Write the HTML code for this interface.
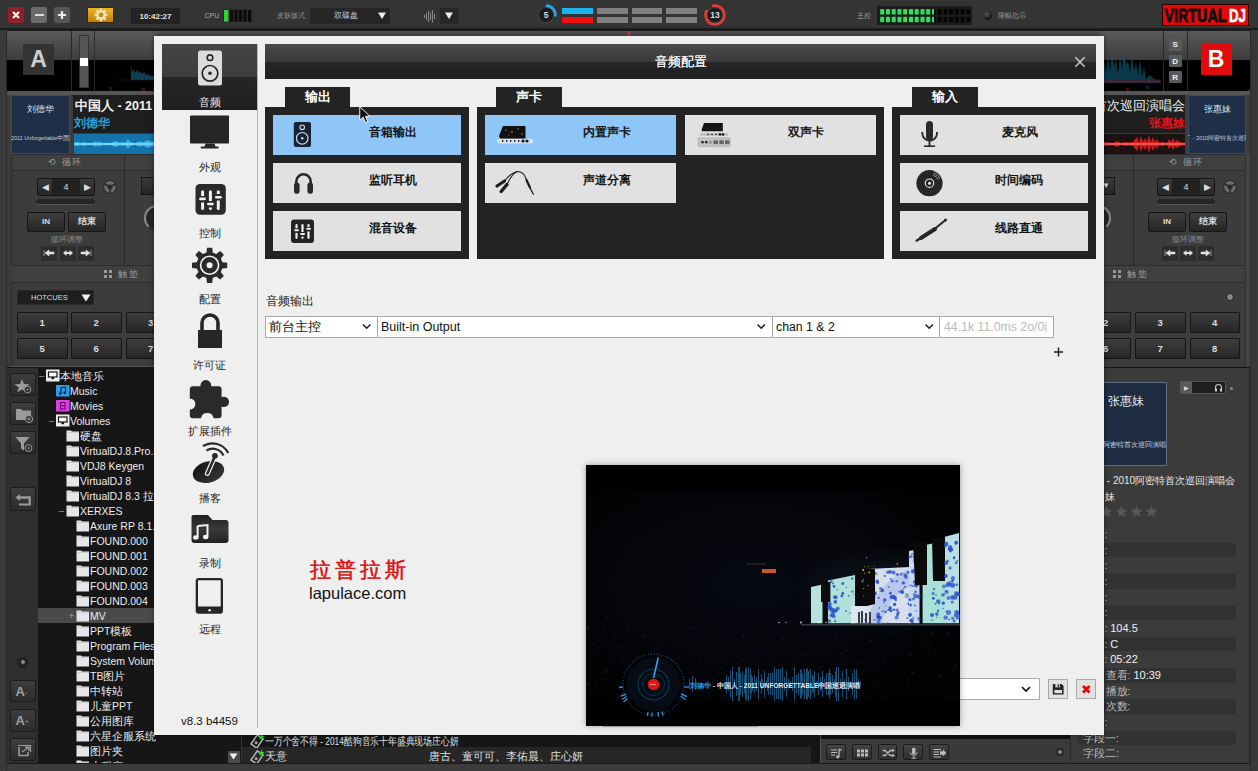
<!DOCTYPE html>
<html><head><meta charset="utf-8">
<style>
*{box-sizing:border-box;margin:0;padding:0}
html,body{width:1258px;height:771px;overflow:hidden;background:#3c3c3c;font-family:"Liberation Sans",sans-serif}
.a{position:absolute}
.c{display:flex;align-items:center;justify-content:center}
/* top bar */
#top{left:0;top:0;width:1258px;height:31px;background:#343434;border-bottom:3px solid #1b1b1b}
/* deck */
.dk{background:#3c3c3c}
.btn{background:linear-gradient(#3e3e3e,#262626);border:1px solid #161616;border-radius:2px;color:#ddd;font-weight:bold;font-size:8px}
.tree div{position:absolute;height:15px;line-height:15px;font-size:10.5px;color:#eee;white-space:nowrap}
.fold{display:inline-block;width:13px;height:11px;background:#e8e8e8;vertical-align:-1px;margin-right:1px;position:relative}
.tbb{width:26.5px;background:linear-gradient(#3e3e3e,#2b2b2b);border:1px solid #1c1c1c;border-radius:2px}
.tbb2{top:743.5px;width:19.5px;height:16.5px;background:linear-gradient(#444,#2e2e2e);border:1px solid #1c1c1c;border-radius:2px}
.tt{height:15px;line-height:15px;font-size:10.5px;color:#ececec;white-space:nowrap}
.it{height:15px;line-height:15px;font-size:10.3px;color:#b8b8b8;white-space:nowrap}
.it b{font-weight:normal;color:#f0f0f0;font-size:11px}
/* dialog */
#dlg{left:154px;top:36px;width:950px;height:699px;background:#efefef;box-shadow:0 0 4px rgba(0,0,0,.5)}
.pn{background:#232323}
.tab{background:#232323;color:#fff;font-size:13px;font-weight:bold;text-align:center;line-height:20px;height:20px}
.bt{background:#e1e1e1;height:40px}
.bt.sel{background:#8ec6f7}
.bt span{position:absolute;font-size:12.3px;font-weight:bold;color:#151515;top:0;line-height:34px}
.side{position:absolute;font-size:10.5px;line-height:14px;color:#262626;text-align:center;width:95px;left:8px}
.sel2{border:1px solid #a9a9a9;background:#fff;height:22px}
</style></head>
<body>
<!-- ================= TOP BAR ================= -->
<div id="top" class="a">
  <div class="a c" style="left:8px;top:7px;width:16px;height:16px;background:#8e2029;border-radius:2px"><svg width="10" height="10"><path d="M2 2 L8 8 M8 2 L2 8" stroke="#f4f4f4" stroke-width="2.2"/></svg></div>
  <div class="a c" style="left:31px;top:7px;width:16px;height:16px;background:#6a6a6a;border-radius:2px"><div style="width:9px;height:2.2px;background:#ddd"></div></div>
  <div class="a c" style="left:54px;top:7px;width:16px;height:16px;background:#565656;border-radius:2px"><svg width="10" height="10"><path d="M1 5 H9 M5 1 V9" stroke="#eee" stroke-width="2.2"/></svg></div>
  <div class="a c" style="left:87px;top:6.5px;width:27px;height:16px;background:linear-gradient(#f0b424,#c08008);border-radius:1px;border:1px solid #3a2800"><svg width="14" height="14" viewBox="-7 -7 14 14"><g fill="#f2e4c0"><circle r="4.6"/><rect x="-1.3" y="-6.4" width="2.6" height="12.8"/><rect x="-1.3" y="-6.4" width="2.6" height="12.8" transform="rotate(45)"/><rect x="-1.3" y="-6.4" width="2.6" height="12.8" transform="rotate(90)"/><rect x="-1.3" y="-6.4" width="2.6" height="12.8" transform="rotate(135)"/></g><circle r="2.4" fill="#c88a10"/></svg></div>
  <div class="a c" style="left:131px;top:8px;width:49px;height:16px;background:#232323;color:#e6e6e6;font-size:8px;font-weight:bold">10:42:27</div>
  <div class="a" style="left:204.5px;top:11px;font-size:7px;color:#aaa;line-height:10px">CPU</div>
  <div class="a" style="left:223px;top:8.7px;width:30px;height:13.6px;background:#2a2a2a"></div>
  <svg class="a" style="left:223px;top:8.7px" width="30" height="14"><rect x="1" y="1" width="4.4" height="11.6" fill="#35d040"/><rect x="7" y="1" width="3" height="11.6" fill="#0a0a0a"/><rect x="11.5" y="1" width="3" height="11.6" fill="#0a0a0a"/><rect x="16" y="1" width="3" height="11.6" fill="#0a0a0a"/><rect x="20.5" y="1" width="3" height="11.6" fill="#0a0a0a"/><rect x="25" y="1" width="3" height="11.6" fill="#0a0a0a"/></svg>
  <div class="a" style="left:276.5px;top:11px;font-size:6.8px;color:#999;line-height:10px">皮肤版式</div>
  <div class="a" style="left:310px;top:8px;width:80px;height:16px;background:#262626;color:#c8c8c8;font-size:7.5px;line-height:16px;padding-left:24px">双碟盘</div>
  <svg class="a" style="left:377px;top:11px" width="10" height="9"><path d="M1 1.5 H9 L5 8 Z" fill="#eee"/></svg>
  <svg class="a" style="left:422px;top:8px" width="16" height="16"><g stroke="#8a8a8a" stroke-width="1"><path d="M2.5 7 V10 M4.5 5 V12 M6.5 3 V14 M8.5 4.5 V12.5 M10.5 2.5 V14.5 M12.5 6 V11"/></g></svg>
  <div class="a" style="left:439.5px;top:8px;width:19px;height:16px;background:#262626"></div>
  <svg class="a" style="left:444px;top:11px" width="10" height="9"><path d="M1 1.5 H9 L5 8 Z" fill="#eee"/></svg>
  <svg class="a" style="left:534px;top:3px" width="24" height="24" viewBox="-12 -12 24 24"><circle r="9.4" fill="#3a3a3a"/><circle r="7" fill="#1c1c1c"/><path d="M0 -9.4 A9.4 9.4 0 0 1 9.3 1.5" fill="none" stroke="#2aa8e8" stroke-width="2.6"/><text x="0" y="3" font-family="Liberation Sans" font-size="8.5" font-weight="bold" fill="#ddd" text-anchor="middle">5</text></svg>
  <div class="a" style="left:561.5px;top:8px;width:31px;height:6px;background:#1eb4f0"></div>
  <div class="a" style="left:561.5px;top:17px;width:31px;height:6.3px;background:#ee1010"></div>
  <div class="a" style="left:597px;top:8px;width:30.5px;height:6px;background:#808080"></div>
  <div class="a" style="left:597px;top:17px;width:30.5px;height:6.3px;background:#808080"></div>
  <div class="a" style="left:631.5px;top:8px;width:30.5px;height:6px;background:#808080"></div>
  <div class="a" style="left:631.5px;top:17px;width:30.5px;height:6.3px;background:#808080"></div>
  <div class="a" style="left:666px;top:8px;width:30.5px;height:6px;background:#808080"></div>
  <div class="a" style="left:666px;top:17px;width:30.5px;height:6.3px;background:#808080"></div>
  <svg class="a" style="left:702.5px;top:3px" width="24" height="24" viewBox="-12 -12 24 24"><circle r="9.4" fill="#3a3a3a"/><circle r="7" fill="#1c1c1c"/><path d="M-8 -5 A9.4 9.4 0 1 0 -3 -8.9" fill="none" stroke="#e83838" stroke-width="2.6"/><text x="0" y="3" font-family="Liberation Sans" font-size="8.5" font-weight="bold" fill="#ddd" text-anchor="middle">13</text></svg>
  <div class="a" style="left:857px;top:11px;font-size:6.8px;color:#aaa;line-height:10px">主控</div>
  <div class="a" style="left:877px;top:5.6px;width:95px;height:19.5px;background:#1c1c1c"></div>
  <svg class="a" style="left:877px;top:5.6px" width="95" height="20"><rect x="3.2" y="3.1" width="4" height="5.4" fill="#2fe05a"/><rect x="9.0" y="3.1" width="4" height="5.4" fill="#2fe05a"/><rect x="14.7" y="3.1" width="4" height="5.4" fill="#2fe05a"/><rect x="20.5" y="3.1" width="4" height="5.4" fill="#2fe05a"/><rect x="26.2" y="3.1" width="4" height="5.4" fill="#2fe05a"/><rect x="32.0" y="3.1" width="4" height="5.4" fill="#2fe05a"/><rect x="37.7" y="3.1" width="4" height="5.4" fill="#2fe05a"/><rect x="43.5" y="3.1" width="4" height="5.4" fill="#2fe05a"/><rect x="49.2" y="3.1" width="4" height="5.4" fill="#2fe05a"/><rect x="55.0" y="3.1" width="4" height="5.4" fill="#050505"/><rect x="60.7" y="3.1" width="4" height="5.4" fill="#050505"/><rect x="66.5" y="3.1" width="4" height="5.4" fill="#050505"/><rect x="72.2" y="3.1" width="4" height="5.4" fill="#050505"/><rect x="78.0" y="3.1" width="4" height="5.4" fill="#050505"/><rect x="83.7" y="3.1" width="4" height="5.4" fill="#050505"/><rect x="89.5" y="3.1" width="4" height="5.4" fill="#050505"/><rect x="55.0" y="3.1" width="2" height="5.4" fill="#2fe05a"/><rect x="3.2" y="10.8" width="4" height="5.4" fill="#2fe05a"/><rect x="9.0" y="10.8" width="4" height="5.4" fill="#2fe05a"/><rect x="14.7" y="10.8" width="4" height="5.4" fill="#2fe05a"/><rect x="20.5" y="10.8" width="4" height="5.4" fill="#2fe05a"/><rect x="26.2" y="10.8" width="4" height="5.4" fill="#2fe05a"/><rect x="32.0" y="10.8" width="4" height="5.4" fill="#2fe05a"/><rect x="37.7" y="10.8" width="4" height="5.4" fill="#2fe05a"/><rect x="43.5" y="10.8" width="4" height="5.4" fill="#2fe05a"/><rect x="49.2" y="10.8" width="4" height="5.4" fill="#2fe05a"/><rect x="55.0" y="10.8" width="4" height="5.4" fill="#050505"/><rect x="60.7" y="10.8" width="4" height="5.4" fill="#050505"/><rect x="66.5" y="10.8" width="4" height="5.4" fill="#050505"/><rect x="72.2" y="10.8" width="4" height="5.4" fill="#050505"/><rect x="78.0" y="10.8" width="4" height="5.4" fill="#050505"/><rect x="83.7" y="10.8" width="4" height="5.4" fill="#050505"/><rect x="89.5" y="10.8" width="4" height="5.4" fill="#050505"/><rect x="55.0" y="10.8" width="2" height="5.4" fill="#2fe05a"/></svg>
  <div class="a" style="left:983px;top:11px;width:9px;height:9px;border-radius:50%;background:radial-gradient(circle at 40% 35%,#555,#111 70%)"></div>
  <div class="a" style="left:998px;top:11px;font-size:6.8px;color:#999;line-height:10px">限幅指示</div>
  <svg class="a" style="left:1162px;top:4px" width="87" height="22"><rect x="0.5" y="0.5" width="86" height="21" fill="#e00a0a" stroke="#300" stroke-width="1"/><text x="2.6" y="17.6" font-family="Liberation Sans" font-weight="bold" font-size="19" fill="#111" stroke="#111" stroke-width="0.9" textLength="61.8" lengthAdjust="spacingAndGlyphs">VIRTUAL</text><text x="67" y="17.6" font-family="Liberation Sans" font-weight="bold" font-size="19" fill="#fff" stroke="#fff" stroke-width="0.6" textLength="17" lengthAdjust="spacingAndGlyphs">DJ</text></svg>
</div>
<div class="a" style="left:0;top:31px;width:1258px;height:6px;background:linear-gradient(#505050,#464646)"></div>
<div class="a" style="left:628px;top:31px;width:2px;height:5px;background:#e03030"></div>

<!-- ================= LEFT DECK ================= -->
<div class="a" style="left:0;top:30px;width:7px;height:741px;background:#3a3a3a;border-right:1px solid #2a2a2a"></div>
<div class="a dk" style="left:7px;top:31px;width:150px;height:336px;border-radius:4px 0 0 0"></div>
<!-- top section -->
<div class="a" style="left:7px;top:31px;width:150px;height:29px;background:linear-gradient(#5a5a5a,#3c3c3c);border-radius:4px 0 0 0"></div>
<div class="a" style="left:7px;top:60px;width:150px;height:31px;background:#000"></div>
<div class="a" style="left:71px;top:31px;width:1px;height:60px;background:#2a2a2a"></div>
<div class="a" style="left:94px;top:31px;width:1px;height:60px;background:#2a2a2a"></div>
<div class="a c" style="left:23px;top:44px;width:31px;height:31px;background:#333;color:#cfcfcf;font-size:23px;font-weight:bold">A</div>
<div class="a" style="left:79px;top:34.5px;width:10px;height:53.5px;background:#555;border:1px solid #333"></div>
<div class="a" style="left:80px;top:58px;width:8px;height:8px;background:#fff"></div>
<svg class="a" style="left:95px;top:60px;opacity:.65" width="60" height="31">
  <path d="M36 20 L36 5 L37 12 L39 9 L40 13 L42 10 L44 13 L45 11 L47 14 L49 12 L51 15 L53 14 L55 16 L57 15 L59 17 V20 Z" fill="#17607f"/>
  <rect x="20" y="19.5" width="40" height="1" fill="#0e3a4c" opacity=".5"/>
  <rect x="46" y="28" width="4" height="3" fill="#6a1010"/>
  <rect x="14" y="27" width="3" height="4" fill="#0c3020"/>
  <rect x="58" y="27" width="4" height="3" fill="#0c3e58"/>
</svg>
<div class="a" style="left:7px;top:91px;width:150px;height:4px;background:#555"></div>
<!-- song info -->
<div class="a" style="left:11px;top:95px;width:59px;height:59px;background:#1f2f47;border:1px solid #3a4a60"></div>
<div class="a" style="left:11px;top:103px;width:59px;text-align:center;font-size:9px;color:#dfe6ee">刘德华</div>
<div class="a" style="left:11px;top:135px;width:59px;text-align:center;font-size:5.5px;color:#c8d0da;white-space:nowrap;overflow:hidden">2011 Unforgettable中国巡</div>
<div class="a" style="left:73px;top:95px;width:84px;height:38px;background:#1e1e1e"></div>
<div class="a" style="left:75px;top:97px;font-size:12.5px;font-weight:bold;color:#f2f2f2;white-space:nowrap;line-height:18px">中国人 - 2011 U</div>
<div class="a" style="left:74px;top:114px;font-size:11.5px;font-weight:bold;color:#2b9fdc;white-space:nowrap;line-height:18px">刘德华</div>
<div class="a" style="left:74px;top:134px;width:84px;height:20px;background:#1473aa"></div>
<svg class="a" style="left:74px;top:134px" width="84" height="20"><path d="M0 10 L0 8.8 L2 8.0 L4 8.0 L6 8.8 L8 9.0 L10 7.5 L12 8.5 L14 9.0 L16 8.5 L18 9.0 L20 8.0 L22 7.5 L24 8.5 L26 7.5 L28 8.8 L30 9.0 L32 8.8 L34 8.5 L36 9.0 L38 8.5 L40 7.5 L42 7.0 L44 8.0 L46 8.8 L48 8.0 L50 8.5 L52 8.0 L54 5.0 L56 8.0 L58 8.0 L60 9.0 L62 9.0 L64 7.5 L66 7.5 L68 8.0 L70 8.0 L72 7.0 L74 6.0 L76 7.5 L78 7.5 L80 8.0 L82 7.5 L84 8.8 L84 10 L84 11.2 L82 12.5 L80 12.0 L78 12.5 L76 12.5 L74 14.0 L72 13.0 L70 12.0 L68 12.0 L66 12.5 L64 12.5 L62 11.0 L60 11.0 L58 12.0 L56 12.0 L54 15.0 L52 12.0 L50 11.5 L48 12.0 L46 11.2 L44 12.0 L42 13.0 L40 12.5 L38 11.5 L36 11.0 L34 11.5 L32 11.2 L30 11.0 L28 11.2 L26 12.5 L24 11.5 L22 12.5 L20 12.0 L18 11.0 L16 11.5 L14 11.0 L12 11.5 L10 12.5 L8 11.0 L6 11.2 L4 12.0 L2 12.0 L0 11.2 Z" fill="#3ab4ee"/><rect x="0" y="9.3" width="84" height="1.4" fill="#8fdcff"/></svg>
<!-- loop section -->
<div class="a" style="left:11px;top:154px;width:113px;height:17px;background:#3f3f3f;border-top:1px solid #2c2c2c;border-bottom:1px solid #2c2c2c"></div>
<div class="a" style="left:125px;top:154px;width:32px;height:17px;background:#3f3f3f;border-top:1px solid #2c2c2c;border-bottom:1px solid #2c2c2c"></div>
<div class="a" style="left:48px;top:157px;font-size:9px;color:#9a9a9a;letter-spacing:1.5px;line-height:11px">⟲ 循环</div>
<div class="a" style="left:124px;top:154px;width:1px;height:112px;background:#2a2a2a"></div>
<div class="a" style="left:11px;top:154px;width:1px;height:212px;background:#2e2e2e"></div>
<div class="a" style="left:37px;top:177.5px;width:58px;height:18px;background:#222;border:1px solid #151515;border-radius:2px"></div>
<div class="a c" style="left:38px;top:178.5px;width:14px;height:16px;background:linear-gradient(#3a3a3a,#262626);color:#ddd;font-size:9px">◀</div>
<div class="a c" style="left:80px;top:178.5px;width:14px;height:16px;background:linear-gradient(#3a3a3a,#262626);color:#ddd;font-size:9px">▶</div>
<div class="a c" style="left:52px;top:178.5px;width:28px;height:16px;color:#ddd;font-size:9px">4</div>
<svg class="a" style="left:102.5px;top:179.5px" width="14" height="14" viewBox="-7 -7 14 14"><circle r="6.5" fill="#6a6a6a" stroke="#2a2a2a" stroke-width="1.2"/><circle r="2.4" fill="#2a2a2a"/><path d="M0 2 V6 M-1.8 -1 L-5.2 -3 M1.8 -1 L5.2 -3" stroke="#2a2a2a" stroke-width="1.6"/></svg>
<div class="a" style="left:141px;top:177px;width:16px;height:18px;background:linear-gradient(#3a3a3a,#252525);border:1px solid #151515"></div>
<div class="a" style="left:144px;top:205px;width:26px;height:26px;border-radius:50%;background:#262626;border:2px solid #8a8a8a;border-right-color:#333;border-bottom-color:#333"></div>
<div class="a" style="left:36px;top:199px;width:59px;height:6px;background:#252525;border-radius:3px;border-bottom:1px solid #555"></div>
<div class="a c btn" style="left:27px;top:211.5px;width:38px;height:20px">IN</div>
<div class="a c btn" style="left:68px;top:211.5px;width:38px;height:20px;font-size:8.5px">结束</div>
<div class="a" style="left:50px;top:235px;width:34px;text-align:center;font-size:7.5px;color:#8a8a8a;line-height:10px">循环调整</div>
<div class="a c" style="left:41px;top:245.5px;width:16px;height:15px;background:#2d2d2d;color:#ddd;font-size:8px;border-radius:1px"><svg width="12" height="8"><path d="M1 1 V7 M2 4 L6 1 V3 H11 V5 H6 V7 Z" fill="#e0e0e0" stroke="#e0e0e0" stroke-width=".6"/></svg></div>
<div class="a c" style="left:59.5px;top:245.5px;width:16px;height:15px;background:#2d2d2d;color:#ddd;font-size:8px;border-radius:1px"><svg width="12" height="8"><path d="M1 4 L4.5 1 V3 H7.5 V1 L11 4 L7.5 7 V5 H4.5 V7 Z" fill="#e0e0e0"/></svg></div>
<div class="a c" style="left:78px;top:245.5px;width:16px;height:15px;background:#2d2d2d;color:#ddd;font-size:8px;border-radius:1px"><svg width="12" height="8"><path d="M11 1 V7 M10 4 L6 1 V3 H1 V5 H6 V7 Z" fill="#e0e0e0" stroke="#e0e0e0" stroke-width=".6"/></svg></div>
<!-- pads -->
<div class="a" style="left:11px;top:265px;width:146px;height:18px;background:#3f3f3f;border-top:1px solid #2c2c2c;border-bottom:1px solid #2c2c2c"></div>
<div class="a" style="left:104px;top:270px;width:8px;height:8px;background:repeating-linear-gradient(90deg,#9a9a9a 0 3px,transparent 3px 5px)"></div>
<div class="a" style="left:104px;top:273px;width:8px;height:2px;background:#3f3f3f"></div>
<div class="a" style="left:118px;top:269px;font-size:8.5px;color:#9a9a9a;letter-spacing:1.5px;line-height:10px">触垫</div>
<div class="a" style="left:17px;top:290px;width:77px;height:15px;background:#1e1e1e;border:1px solid #2a2a2a;color:#ddd;font-size:7.5px;line-height:13px;padding-left:13px">HOTCUES<svg style="position:absolute;left:63px;top:3px" width="10" height="8"><path d="M0.5 0.5 H9.5 L5 7.5 Z" fill="#eee"/></svg></div>
<div class="a c btn" style="left:17.0px;top:312px;width:50.5px;height:20.5px;font-size:9.5px;border-radius:1px">1</div>
<div class="a c btn" style="left:71.0px;top:312px;width:50.5px;height:20.5px;font-size:9.5px;border-radius:1px">2</div>
<div class="a c btn" style="left:125.5px;top:312px;width:50.5px;height:20.5px;font-size:9.5px;border-radius:1px">3</div>
<div class="a c btn" style="left:17.0px;top:338px;width:50.5px;height:20.5px;font-size:9.5px;border-radius:1px">5</div>
<div class="a c btn" style="left:71.0px;top:338px;width:50.5px;height:20.5px;font-size:9.5px;border-radius:1px">6</div>
<div class="a c btn" style="left:125.5px;top:338px;width:50.5px;height:20.5px;font-size:9.5px;border-radius:1px">7</div>
<div class="a" style="left:11px;top:366px;width:146px;height:1px;background:#555"></div>

<!-- ================= RIGHT DECK ================= -->
<div class="a" style="left:1250px;top:30px;width:8px;height:741px;background:#383838;border-left:1px solid #2a2a2a"></div>
<div class="a dk" style="left:1100px;top:31px;width:150px;height:336px;border-radius:0 4px 0 0"></div>
<div class="a" style="left:1100px;top:31px;width:150px;height:29px;background:linear-gradient(#5a5a5a,#3c3c3c);border-radius:0 4px 0 0"></div>
<div class="a" style="left:1100px;top:60px;width:150px;height:31px;background:#000;border-radius:0 0 4px 0"></div>
<svg class="a" style="left:1100px;top:31px;opacity:.6" width="64" height="60">
  <path d="M3 50 L4 30 L6 42 L8 26 L10 40 L12 20 L14 36 L16 28 L18 44 L20 24 L22 38 L24 18 L26 34 L28 30 L30 42 L32 22 L34 40 L36 32 L38 44 L40 28 L42 46 L44 36 L46 48 L50 44 L54 48 L60 49 V52 H3 Z" fill="#13607f"/>
  <rect x="3" y="49" width="58" height="3" fill="#7a3a5a" opacity=".8"/>
  <rect x="26" y="57" width="3" height="3" fill="#8a1010"/>
  <rect x="46" y="55" width="3" height="3" fill="#0c3e58"/>
</svg>
<div class="a" style="left:1163px;top:31px;width:1px;height:60px;background:#2a2a2a"></div>
<div class="a" style="left:1187px;top:31px;width:1px;height:60px;background:#2a2a2a"></div>
<div class="a c" style="left:1169px;top:38.5px;width:12.5px;height:12px;background:#5a5a5a;color:#eee;font-size:8px;font-weight:bold;border-radius:1px">S</div>
<div class="a c" style="left:1169px;top:55px;width:12.5px;height:12px;background:#5a5a5a;color:#eee;font-size:8px;font-weight:bold;border-radius:1px">D</div>
<div class="a c" style="left:1169px;top:71px;width:12.5px;height:12px;background:#5a5a5a;color:#eee;font-size:8px;font-weight:bold;border-radius:1px">R</div>
<div class="a c" style="left:1200.5px;top:44px;width:31px;height:31px;background:#e00c0c;color:#fff;font-size:23px;font-weight:bold">B</div>
<div class="a" style="left:1100px;top:91px;width:150px;height:4px;background:#555"></div>
<div class="a" style="left:1100px;top:95px;width:85px;height:38px;background:#1e1e1e"></div>
<div class="a" style="left:1060px;top:97px;width:124.5px;text-align:right;font-size:13px;color:#f2f2f2;white-space:nowrap;line-height:18px">首次巡回演唱会</div>
<div class="a" style="left:1100px;top:114px;width:84.5px;text-align:right;font-size:11.5px;font-weight:bold;color:#e5161d;white-space:nowrap;line-height:18px">张惠妹</div>
<div class="a" style="left:1100px;top:134px;width:85px;height:20px;background:#1c1212"></div>
<svg class="a" style="left:1103px;top:134px" width="82" height="20">
  <path d="M0 8 L6 8.5 L10 9 L14 7 L18 9 L22 8 L26 8.5 L30 8 L34 3 L36 9 L38 2 L40 8 L42 4 L44 8 L46 1 L48 8 L50 3 L52 8 L54 5 L56 8.5 L60 8 L64 9 L66 5 L68 8 L70 4 L72 8 L74 6 L78 8.5 L82 8.5 V11.5 L78 11.5 L74 14 L72 12 L70 16 L68 12 L66 15 L64 11 L60 12 L56 11.5 L54 15 L52 12 L50 17 L48 12 L46 19 L44 12 L42 16 L40 12 L38 18 L36 11 L34 17 L30 12 L26 11.5 L22 12 L18 11 L14 13 L10 11 L6 11.5 L0 12 Z" fill="#d41818"/>
  <rect x="0" y="9.3" width="82" height="1.4" fill="#ff7070"/>
</svg>
<div class="a" style="left:1188px;top:95px;width:58px;height:59px;background:#1f2f47;border:1px solid #3a4a60"></div>
<div class="a" style="left:1188px;top:103px;width:58px;text-align:center;font-size:9px;color:#dfe6ee">张惠妹</div>
<div class="a" style="left:1188px;top:135px;width:58px;text-align:center;font-size:5.5px;color:#c8d0da;white-space:nowrap;overflow:hidden">ﾟ - 2010阿密特首次巡回演</div>
<!-- loop -->
<div class="a" style="left:1100px;top:154px;width:33px;height:17px;background:#3f3f3f;border-top:1px solid #2c2c2c;border-bottom:1px solid #2c2c2c"></div>
<div class="a" style="left:1134px;top:154px;width:112px;height:17px;background:#3f3f3f;border-top:1px solid #2c2c2c;border-bottom:1px solid #2c2c2c"></div>
<div class="a" style="left:1169px;top:157px;font-size:9px;color:#9a9a9a;letter-spacing:1.5px;line-height:11px">⟲ 循环</div>
<div class="a" style="left:1133px;top:154px;width:1px;height:112px;background:#2a2a2a"></div>
<div class="a" style="left:1245px;top:154px;width:6px;height:212px;background:#454545;border-left:1px solid #2e2e2e;border-right:1px solid #2e2e2e"></div>
<div class="a" style="left:1097px;top:177px;width:18px;height:18px;background:linear-gradient(#3a3a3a,#252525);border:1px solid #151515;color:#ddd;font-size:8px;line-height:16px;text-align:center">▼</div>
<div class="a" style="left:1085px;top:205px;width:26px;height:26px;border-radius:50%;background:#262626;border:2px solid #8a8a8a;border-left-color:#333;border-bottom-color:#333"></div>
<div class="a" style="left:1157px;top:177.5px;width:58px;height:18px;background:#222;border:1px solid #151515;border-radius:2px"></div>
<div class="a c" style="left:1158px;top:178.5px;width:14px;height:16px;background:linear-gradient(#3a3a3a,#262626);color:#ddd;font-size:9px">◀</div>
<div class="a c" style="left:1200px;top:178.5px;width:14px;height:16px;background:linear-gradient(#3a3a3a,#262626);color:#ddd;font-size:9px">▶</div>
<div class="a c" style="left:1172px;top:178.5px;width:28px;height:16px;color:#ddd;font-size:9px">4</div>
<svg class="a" style="left:1223px;top:179.5px" width="14" height="14" viewBox="-7 -7 14 14"><circle r="6.5" fill="#6a6a6a" stroke="#2a2a2a" stroke-width="1.2"/><circle r="2.4" fill="#2a2a2a"/><path d="M0 2 V6 M-1.8 -1 L-5.2 -3 M1.8 -1 L5.2 -3" stroke="#2a2a2a" stroke-width="1.6"/></svg>
<div class="a" style="left:1157px;top:199px;width:58px;height:6px;background:#252525;border-radius:3px;border-bottom:1px solid #555"></div>
<div class="a c btn" style="left:1148px;top:211.5px;width:38px;height:20px">IN</div>
<div class="a c btn" style="left:1188.5px;top:211.5px;width:38px;height:20px;font-size:8.5px">结束</div>
<div class="a" style="left:1171px;top:235px;width:34px;text-align:center;font-size:7.5px;color:#8a8a8a;line-height:10px">循环调整</div>
<div class="a c" style="left:1161.5px;top:245.5px;width:16px;height:15px;background:#2d2d2d;color:#ddd;font-size:8px;border-radius:1px"><svg width="12" height="8"><path d="M1 1 V7 M2 4 L6 1 V3 H11 V5 H6 V7 Z" fill="#e0e0e0" stroke="#e0e0e0" stroke-width=".6"/></svg></div>
<div class="a c" style="left:1180px;top:245.5px;width:16px;height:15px;background:#2d2d2d;color:#ddd;font-size:8px;border-radius:1px"><svg width="12" height="8"><path d="M1 4 L4.5 1 V3 H7.5 V1 L11 4 L7.5 7 V5 H4.5 V7 Z" fill="#e0e0e0"/></svg></div>
<div class="a c" style="left:1198px;top:245.5px;width:16px;height:15px;background:#2d2d2d;color:#ddd;font-size:8px;border-radius:1px"><svg width="12" height="8"><path d="M11 1 V7 M10 4 L6 1 V3 H1 V5 H6 V7 Z" fill="#e0e0e0" stroke="#e0e0e0" stroke-width=".6"/></svg></div>
<!-- pads -->
<div class="a" style="left:1100px;top:265px;width:145px;height:18px;background:#3f3f3f;border-top:1px solid #2c2c2c;border-bottom:1px solid #2c2c2c"></div>
<div class="a" style="left:1113px;top:270px;width:8px;height:8px;background:repeating-linear-gradient(90deg,#9a9a9a 0 3px,transparent 3px 5px)"></div>
<div class="a" style="left:1113px;top:273px;width:8px;height:2px;background:#3f3f3f"></div>
<div class="a" style="left:1127px;top:269px;font-size:8.5px;color:#9a9a9a;letter-spacing:1.5px;line-height:10px">触垫</div>
<div class="a" style="left:1226px;top:293px;width:8px;height:8px;border-radius:50%;background:#8a8a8a;border:1.5px solid #1e1e1e"></div>
<div class="a c btn" style="left:1080.5px;top:312px;width:50.5px;height:20.5px;font-size:9.5px;border-radius:1px">2</div>
<div class="a c btn" style="left:1135.0px;top:312px;width:50.5px;height:20.5px;font-size:9.5px;border-radius:1px">3</div>
<div class="a c btn" style="left:1189.5px;top:312px;width:50.5px;height:20.5px;font-size:9.5px;border-radius:1px">4</div>
<div class="a c btn" style="left:1080.5px;top:338px;width:50.5px;height:20.5px;font-size:9.5px;border-radius:1px">6</div>
<div class="a c btn" style="left:1135.0px;top:338px;width:50.5px;height:20.5px;font-size:9.5px;border-radius:1px">7</div>
<div class="a c btn" style="left:1189.5px;top:338px;width:50.5px;height:20.5px;font-size:9.5px;border-radius:1px">8</div>

<!-- ================= BROWSER ================= -->
<div class="a" style="left:7px;top:366.5px;width:1243px;height:397px;background:#303030;border-top:1.5px solid #151515"></div>
<!-- left toolbar -->
<div class="a" style="left:7px;top:368px;width:31px;height:395px;background:#2f2f2f"></div>
<div class="a tbb" style="left:9.5px;top:372.5px;height:23px"><svg width="26" height="23"><path d="M11 5 L13 10 L18.5 10.2 L14.2 13.5 L15.8 18.6 L11 15.5 L6.2 18.6 L7.8 13.5 L3.5 10.2 L9 10 Z" fill="#9a9a9a"/><circle cx="16.5" cy="15.5" r="3.3" fill="#2e2e2e" stroke="#9a9a9a" stroke-width="1"/><circle cx="16.5" cy="15.5" r="1" fill="#9a9a9a"/></svg></div>
<div class="a tbb" style="left:9.5px;top:401.5px;height:23px"><svg width="26" height="23"><path d="M5 6 H10 L11.5 7.5 H20 V17 H5 Z" fill="#9a9a9a"/><circle cx="18" cy="16" r="3.6" fill="#2e2e2e" stroke="#9a9a9a" stroke-width="1"/><path d="M16.2 16 H19.8 M18 14.2 V17.8" stroke="#9a9a9a" stroke-width="1"/></svg></div>
<div class="a tbb" style="left:9.5px;top:430.5px;height:23px"><svg width="26" height="23"><path d="M4.5 5 H18.5 L13 11.5 V18.5 L10 16.5 V11.5 Z" fill="#9a9a9a"/><circle cx="17.5" cy="16" r="3.4" fill="#2e2e2e" stroke="#9a9a9a" stroke-width="1"/><circle cx="17.5" cy="16" r="1" fill="#9a9a9a"/></svg></div>
<div class="a tbb" style="left:9.5px;top:487px;height:23.5px"><svg width="26" height="23"><path d="M9 6 L4.5 9.5 L9 13 V10.8 H17.5 V15.5 H8 V17.5 H19.8 V8.2 H9 Z" fill="#9a9a9a"/></svg></div>
<div class="a" style="left:17px;top:656.5px;width:11px;height:11px;border-radius:50%;background:#242424;border:1px solid #1a1a1a"></div>
<div class="a" style="left:20.5px;top:660px;width:4px;height:4px;border-radius:50%;background:#8a8a8a"></div>
<div class="a tbb" style="left:9.5px;top:679.5px;height:22.5px;color:#a0a0a0;font-size:13px;font-weight:bold;line-height:21px;padding-left:5px">A<span style="font-size:6px;vertical-align:1px">-</span></div>
<div class="a tbb" style="left:9.5px;top:709px;height:23px;color:#a0a0a0;font-size:13px;font-weight:bold;line-height:22px;padding-left:5px">A<span style="font-size:6px;vertical-align:2px">+</span></div>
<div class="a tbb" style="left:9.5px;top:738px;height:23px"><svg width="26" height="23"><path d="M8 8 V16.5 H17 V13" fill="none" stroke="#9a9a9a" stroke-width="1.6"/><path d="M7 6.5 H19.5 V13" fill="none" stroke="#9a9a9a" stroke-width="1.2"/><path d="M11 13 L17.5 8.5 M14 8.3 H17.8 V12" fill="none" stroke="#9a9a9a" stroke-width="1.4"/></svg></div>
<!-- tree -->
<div class="a" style="left:38px;top:368px;width:203px;height:395px;background:#161616;overflow:hidden">
<div class="a" style="left:-38px;top:-368px;width:1258px;height:771px">
<div class="a" style="left:39px;top:368.5px;font-size:9px;color:#aaa;line-height:15px">–</div>
<svg class="a" style="left:46px;top:369.0px" width="14" height="13"><rect x="0" y="0.5" width="13.5" height="12" fill="#ececec"/><rect x="2.5" y="3" width="8.5" height="5" fill="#fff" stroke="#111" stroke-width="1.2"/><rect x="5.5" y="8.2" width="2.5" height="2" fill="#111"/></svg>
<div class="a tt" style="left:60px;top:369.0px">本地音乐</div>
<svg class="a" style="left:56px;top:384.0px" width="14" height="13"><rect x="0" y="1" width="13.5" height="11.5" fill="#2a9ee0"/><path d="M5 9.5 V3.8 L9.5 3 V8.5" fill="none" stroke="#0b2a55" stroke-width="1.2"/><circle cx="4.2" cy="9.6" r="1.4" fill="#0b2a55"/><circle cx="8.7" cy="8.8" r="1.4" fill="#0b2a55"/></svg>
<div class="a tt" style="left:70px;top:384.0px">Music</div>
<svg class="a" style="left:56px;top:399.0px" width="14" height="13"><rect x="0" y="1" width="13.5" height="11.5" fill="#e03ce0"/><rect x="4" y="3" width="5.5" height="7.5" fill="#5a0a5a"/><rect x="5" y="4" width="3.5" height="2.3" fill="#e03ce0"/><rect x="5" y="7.2" width="3.5" height="2.3" fill="#e03ce0"/></svg>
<div class="a tt" style="left:70px;top:399.0px">Movies</div>
<div class="a" style="left:49px;top:413.5px;font-size:9px;color:#aaa;line-height:15px">–</div>
<svg class="a" style="left:56px;top:414.0px" width="14" height="13"><rect x="0" y="0.5" width="13.5" height="12" fill="#ececec"/><rect x="2.5" y="3" width="8.5" height="5" fill="#fff" stroke="#111" stroke-width="1.2"/><rect x="5.5" y="8.2" width="2.5" height="2" fill="#111"/></svg>
<div class="a tt" style="left:70px;top:414.0px">Volumes</div>
<svg class="a" style="left:66px;top:429.0px" width="14" height="13"><path d="M0.5 1.5 H5 L6 2.5 H13 V12.5 H0.5 Z" fill="#e6e6e6"/><rect x="0.5" y="3" width="12.5" height="0.6" fill="#bbb"/></svg>
<div class="a tt" style="left:80px;top:429.0px">硬盘</div>
<svg class="a" style="left:66px;top:444.0px" width="14" height="13"><path d="M0.5 1.5 H5 L6 2.5 H13 V12.5 H0.5 Z" fill="#e6e6e6"/><rect x="0.5" y="3" width="12.5" height="0.6" fill="#bbb"/></svg>
<div class="a tt" style="left:80px;top:444.0px">VirtualDJ.8.Pro.Ins</div>
<svg class="a" style="left:66px;top:459.0px" width="14" height="13"><path d="M0.5 1.5 H5 L6 2.5 H13 V12.5 H0.5 Z" fill="#e6e6e6"/><rect x="0.5" y="3" width="12.5" height="0.6" fill="#bbb"/></svg>
<div class="a tt" style="left:80px;top:459.0px">VDJ8 Keygen</div>
<svg class="a" style="left:66px;top:474.0px" width="14" height="13"><path d="M0.5 1.5 H5 L6 2.5 H13 V12.5 H0.5 Z" fill="#e6e6e6"/><rect x="0.5" y="3" width="12.5" height="0.6" fill="#bbb"/></svg>
<div class="a tt" style="left:80px;top:474.0px">VirtualDJ 8</div>
<svg class="a" style="left:66px;top:489.0px" width="14" height="13"><path d="M0.5 1.5 H5 L6 2.5 H13 V12.5 H0.5 Z" fill="#e6e6e6"/><rect x="0.5" y="3" width="12.5" height="0.6" fill="#bbb"/></svg>
<div class="a tt" style="left:80px;top:489.0px">VirtualDJ 8.3 拉普</div>
<div class="a" style="left:59px;top:503.5px;font-size:9px;color:#aaa;line-height:15px">–</div>
<svg class="a" style="left:66px;top:504.0px" width="14" height="13"><path d="M0.5 1.5 H5 L6 2.5 H13 V12.5 H0.5 Z" fill="#e6e6e6"/><rect x="0.5" y="3" width="12.5" height="0.6" fill="#bbb"/></svg>
<div class="a tt" style="left:80px;top:504.0px">XERXES</div>
<svg class="a" style="left:76px;top:519.0px" width="14" height="13"><path d="M0.5 1.5 H5 L6 2.5 H13 V12.5 H0.5 Z" fill="#e6e6e6"/><rect x="0.5" y="3" width="12.5" height="0.6" fill="#bbb"/></svg>
<div class="a tt" style="left:90px;top:519.0px">Axure RP 8.1.0</div>
<svg class="a" style="left:76px;top:534.0px" width="14" height="13"><path d="M0.5 1.5 H5 L6 2.5 H13 V12.5 H0.5 Z" fill="#e6e6e6"/><rect x="0.5" y="3" width="12.5" height="0.6" fill="#bbb"/></svg>
<div class="a tt" style="left:90px;top:534.0px">FOUND.000</div>
<svg class="a" style="left:76px;top:549.0px" width="14" height="13"><path d="M0.5 1.5 H5 L6 2.5 H13 V12.5 H0.5 Z" fill="#e6e6e6"/><rect x="0.5" y="3" width="12.5" height="0.6" fill="#bbb"/></svg>
<div class="a tt" style="left:90px;top:549.0px">FOUND.001</div>
<svg class="a" style="left:76px;top:564.0px" width="14" height="13"><path d="M0.5 1.5 H5 L6 2.5 H13 V12.5 H0.5 Z" fill="#e6e6e6"/><rect x="0.5" y="3" width="12.5" height="0.6" fill="#bbb"/></svg>
<div class="a tt" style="left:90px;top:564.0px">FOUND.002</div>
<svg class="a" style="left:76px;top:579.0px" width="14" height="13"><path d="M0.5 1.5 H5 L6 2.5 H13 V12.5 H0.5 Z" fill="#e6e6e6"/><rect x="0.5" y="3" width="12.5" height="0.6" fill="#bbb"/></svg>
<div class="a tt" style="left:90px;top:579.0px">FOUND.003</div>
<svg class="a" style="left:76px;top:594.0px" width="14" height="13"><path d="M0.5 1.5 H5 L6 2.5 H13 V12.5 H0.5 Z" fill="#e6e6e6"/><rect x="0.5" y="3" width="12.5" height="0.6" fill="#bbb"/></svg>
<div class="a tt" style="left:90px;top:594.0px">FOUND.004</div>
<div class="a" style="left:38px;top:608.2px;width:120px;height:14.7px;background:#4a4a4a"></div>
<div class="a" style="left:69px;top:608.5px;font-size:9px;color:#aaa;line-height:15px">+</div>
<svg class="a" style="left:76px;top:609.0px" width="14" height="13"><path d="M0.5 1.5 H5 L6 2.5 H13 V12.5 H0.5 Z" fill="#e6e6e6"/><rect x="0.5" y="3" width="12.5" height="0.6" fill="#bbb"/></svg>
<div class="a tt" style="left:90px;top:609.0px">MV</div>
<svg class="a" style="left:76px;top:624.0px" width="14" height="13"><path d="M0.5 1.5 H5 L6 2.5 H13 V12.5 H0.5 Z" fill="#e6e6e6"/><rect x="0.5" y="3" width="12.5" height="0.6" fill="#bbb"/></svg>
<div class="a tt" style="left:90px;top:624.0px">PPT模板</div>
<svg class="a" style="left:76px;top:639.0px" width="14" height="13"><path d="M0.5 1.5 H5 L6 2.5 H13 V12.5 H0.5 Z" fill="#e6e6e6"/><rect x="0.5" y="3" width="12.5" height="0.6" fill="#bbb"/></svg>
<div class="a tt" style="left:90px;top:639.0px">Program Files</div>
<svg class="a" style="left:76px;top:654.0px" width="14" height="13"><path d="M0.5 1.5 H5 L6 2.5 H13 V12.5 H0.5 Z" fill="#e6e6e6"/><rect x="0.5" y="3" width="12.5" height="0.6" fill="#bbb"/></svg>
<div class="a tt" style="left:90px;top:654.0px">System Volume</div>
<svg class="a" style="left:76px;top:669.0px" width="14" height="13"><path d="M0.5 1.5 H5 L6 2.5 H13 V12.5 H0.5 Z" fill="#e6e6e6"/><rect x="0.5" y="3" width="12.5" height="0.6" fill="#bbb"/></svg>
<div class="a tt" style="left:90px;top:669.0px">TB图片</div>
<svg class="a" style="left:76px;top:684.0px" width="14" height="13"><path d="M0.5 1.5 H5 L6 2.5 H13 V12.5 H0.5 Z" fill="#e6e6e6"/><rect x="0.5" y="3" width="12.5" height="0.6" fill="#bbb"/></svg>
<div class="a tt" style="left:90px;top:684.0px">中转站</div>
<svg class="a" style="left:76px;top:699.0px" width="14" height="13"><path d="M0.5 1.5 H5 L6 2.5 H13 V12.5 H0.5 Z" fill="#e6e6e6"/><rect x="0.5" y="3" width="12.5" height="0.6" fill="#bbb"/></svg>
<div class="a tt" style="left:90px;top:699.0px">儿童PPT</div>
<svg class="a" style="left:76px;top:714.0px" width="14" height="13"><path d="M0.5 1.5 H5 L6 2.5 H13 V12.5 H0.5 Z" fill="#e6e6e6"/><rect x="0.5" y="3" width="12.5" height="0.6" fill="#bbb"/></svg>
<div class="a tt" style="left:90px;top:714.0px">公用图库</div>
<svg class="a" style="left:76px;top:729.0px" width="14" height="13"><path d="M0.5 1.5 H5 L6 2.5 H13 V12.5 H0.5 Z" fill="#e6e6e6"/><rect x="0.5" y="3" width="12.5" height="0.6" fill="#bbb"/></svg>
<div class="a tt" style="left:90px;top:729.0px">六星企服系统</div>
<svg class="a" style="left:76px;top:744.0px" width="14" height="13"><path d="M0.5 1.5 H5 L6 2.5 H13 V12.5 H0.5 Z" fill="#e6e6e6"/><rect x="0.5" y="3" width="12.5" height="0.6" fill="#bbb"/></svg>
<div class="a tt" style="left:90px;top:744.0px">图片夹</div>
<svg class="a" style="left:76px;top:759.0px" width="14" height="13"><path d="M0.5 1.5 H5 L6 2.5 H13 V12.5 H0.5 Z" fill="#e6e6e6"/><rect x="0.5" y="3" width="12.5" height="0.6" fill="#bbb"/></svg>
<div class="a tt" style="left:90px;top:759.0px">小程序</div>
</div></div>
<div class="a c" style="left:227.5px;top:750.5px;width:12.5px;height:12.5px;background:#4a4a4a"><svg width="9" height="7"><path d="M0.5 0.5 H8.5 L4.5 6.5 Z" fill="#f0f0f0"/></svg></div>
<div class="a" style="left:241px;top:368px;width:1px;height:395px;background:#333"></div>
<!-- song list -->
<div class="a" style="left:242px;top:735px;width:578px;height:28px;background:#161616"></div>
<div class="a" style="left:242px;top:747px;width:569px;height:15.5px;background:#262626"></div>
<svg class="a" style="left:250px;top:733px" width="16" height="15"><g transform="rotate(35 7 8.5)"><rect x="3.5" y="3" width="7" height="11" fill="none" stroke="#b0b0b0" stroke-width="1.6"/><circle cx="7" cy="10" r="1.4" fill="#b0b0b0"/></g><path d="M11.5 0.5 L12.5 3 L15 3.1 L13 4.6 L13.7 7 L11.5 5.6 L9.3 7 L10 4.6 L8 3.1 L10.5 3 Z" fill="#3ad03a"/></svg>
<svg class="a" style="left:250px;top:748.5px" width="16" height="15"><g transform="rotate(35 7 8.5)"><rect x="3.5" y="3" width="7" height="11" fill="none" stroke="#b0b0b0" stroke-width="1.6"/><circle cx="7" cy="10" r="1.4" fill="#b0b0b0"/></g><path d="M11.5 0.5 L12.5 3 L15 3.1 L13 4.6 L13.7 7 L11.5 5.6 L9.3 7 L10 4.6 L8 3.1 L10.5 3 Z" fill="#3ad03a"/></svg>
<div class="a" style="left:265px;top:733.5px;font-size:10.5px;line-height:14px;color:#e0e0e0;white-space:nowrap;transform:scaleX(.8);transform-origin:0 0">一万个舍不得 - 2014酷狗音乐十年盛典现场庄心妍</div>
<div class="a" style="left:265px;top:749px;font-size:10.5px;line-height:14px;color:#e0e0e0;white-space:nowrap">天意</div>
<div class="a" style="left:429px;top:749px;font-size:10.7px;line-height:14px;color:#e0e0e0;white-space:nowrap">唐古、童可可、李佑晨、庄心妍</div>
<div class="a" style="left:820px;top:735px;width:1px;height:28px;background:#555"></div>
<!-- bottom toolbar -->
<div class="a" style="left:821px;top:735px;width:249px;height:28px;background:#3a3a3a"></div>
<div class="a" style="left:821px;top:735px;width:249px;height:4px;background:#111"></div>
<div class="a tbb2" style="left:826px"><svg width="19" height="16"><path d="M4 5 H10 M4 7.5 H10 M4 10 H8" stroke="#bbb" stroke-width="1"/><path d="M12 4 V11.5" stroke="#bbb" stroke-width="1.2"/><path d="M12 4 L14.5 5.5" stroke="#bbb" stroke-width="1.2"/><circle cx="10.8" cy="11.8" r="1.6" fill="#bbb"/></svg></div>
<div class="a tbb2" style="left:852px"><svg width="19" height="16"><g fill="#bbb"><rect x="4" y="4.5" width="3" height="3"/><rect x="8" y="4.5" width="3" height="3"/><rect x="12" y="4.5" width="3" height="3"/><rect x="4" y="8.5" width="3" height="3"/><rect x="8" y="8.5" width="3" height="3"/><rect x="12" y="8.5" width="3" height="3"/></g></svg></div>
<div class="a tbb2" style="left:877.5px"><svg width="19" height="16"><path d="M3.5 5.5 H6 L11.5 10.5 H14 M3.5 10.5 H6 L11.5 5.5 H14" fill="none" stroke="#bbb" stroke-width="1.4"/><path d="M13.5 3.8 L15.8 5.5 L13.5 7.2 Z M13.5 8.8 L15.8 10.5 L13.5 12.2 Z" fill="#bbb"/></svg></div>
<div class="a tbb2" style="left:903px"><svg width="19" height="16"><rect x="8" y="2.5" width="3.5" height="7" rx="1.7" fill="#bbb"/><path d="M6.3 7.5 A3.5 3.5 0 0 0 13.2 7.5" fill="none" stroke="#bbb" stroke-width="1"/><path d="M9.75 11 V13 M7.5 13.2 H12" stroke="#bbb" stroke-width="1"/></svg></div>
<div class="a tbb2" style="left:929px"><svg width="19" height="16"><path d="M3.5 4.5 H11 M3.5 7 H9 M3.5 9.5 H9 M3.5 12 H11" stroke="#bbb" stroke-width="1"/><path d="M10 6.2 H13 V4.5 L16.3 8 L13 11.5 V9.8 H10 Z" fill="#bbb"/></svg></div>
<div class="a" style="left:1055.5px;top:748px;width:8px;height:8px;border-radius:50%;background:#8a8a8a;border:2px solid #262626"></div>
<div class="a" style="left:1070px;top:368px;width:1px;height:395px;background:#2a2a2a"></div>
<!-- info panel -->
<div class="a" style="left:1071px;top:368px;width:179px;height:395px;background:#3b3b3b"></div>
<div class="a" style="left:1096px;top:382px;width:71px;height:84px;background:#1e2d42;border:1px solid #5f6e82"></div>
<div class="a" style="left:1108px;top:393px;font-size:12px;color:#e6ebf0;line-height:16px">张惠妹</div>
<div class="a" style="left:1097px;top:439px;width:69px;font-size:7px;color:#d0d8e0;line-height:12px;white-space:nowrap;overflow:hidden;direction:rtl">2010阿密特首次巡回演唱</div>
<div class="a" style="left:1180px;top:381px;width:46px;height:12.5px;background:#1e1e1e;border:1px solid #555"></div>
<div class="a c" style="left:1181px;top:382px;width:11px;height:10.5px;background:#5a5a5a;color:#ddd;font-size:6px">▶</div>
<svg class="a" style="left:1213px;top:382px" width="11" height="11"><path d="M2.5 8 V5.5 A3 3 0 0 1 8.5 5.5 V8" fill="none" stroke="#ccc" stroke-width="1.1"/><rect x="2" y="6.5" width="2" height="3" fill="#ccc"/><rect x="7" y="6.5" width="2" height="3" fill="#ccc"/></svg>
<div class="a" style="left:1229.5px;top:386.5px;width:3px;height:3px;border-radius:50%;background:#888"></div>
<div class="a" style="left:1104px;top:473px;font-size:10px;color:#e6e6e6;white-space:nowrap;line-height:16px">&nbsp;- 2010阿密特首次巡回演唱会</div>
<div class="a" style="left:1105.2px;top:489px;font-size:10.3px;color:#e6e6e6;line-height:16px">妹</div>
<svg class="a" style="left:1085px;top:504.5px" width="80" height="14"><path transform="translate(0.0 0)" d="M6.5 0.5 L8.2 4.6 L12.6 4.9 L9.2 7.8 L10.3 12.1 L6.5 9.8 L2.7 12.1 L3.8 7.8 L0.4 4.9 L4.8 4.6 Z" fill="#575757"/><path transform="translate(15.0 0)" d="M6.5 0.5 L8.2 4.6 L12.6 4.9 L9.2 7.8 L10.3 12.1 L6.5 9.8 L2.7 12.1 L3.8 7.8 L0.4 4.9 L4.8 4.6 Z" fill="#575757"/><path transform="translate(30.0 0)" d="M6.5 0.5 L8.2 4.6 L12.6 4.9 L9.2 7.8 L10.3 12.1 L6.5 9.8 L2.7 12.1 L3.8 7.8 L0.4 4.9 L4.8 4.6 Z" fill="#575757"/><path transform="translate(45.0 0)" d="M6.5 0.5 L8.2 4.6 L12.6 4.9 L9.2 7.8 L10.3 12.1 L6.5 9.8 L2.7 12.1 L3.8 7.8 L0.4 4.9 L4.8 4.6 Z" fill="#575757"/><path transform="translate(60.0 0)" d="M6.5 0.5 L8.2 4.6 L12.6 4.9 L9.2 7.8 L10.3 12.1 L6.5 9.8 L2.7 12.1 L3.8 7.8 L0.4 4.9 L4.8 4.6 Z" fill="#575757"/></svg>
<div class="a" style="left:1078px;top:542.9px;width:158px;height:14.5px;background:#323232"></div>
<div class="a" style="left:1078px;top:574.2px;width:158px;height:14.5px;background:#323232"></div>
<div class="a" style="left:1078px;top:605.5px;width:158px;height:14.5px;background:#323232"></div>
<div class="a" style="left:1078px;top:636.8px;width:158px;height:14.5px;background:#323232"></div>
<div class="a" style="left:1078px;top:668.1px;width:158px;height:14.5px;background:#323232"></div>
<div class="a" style="left:1078px;top:699.4px;width:158px;height:14.5px;background:#323232"></div>
<div class="a" style="left:1078px;top:730.8px;width:158px;height:14.5px;background:#323232"></div>
<div class="a it" style="left:1104.5px;top:527.0px">:</div>
<div class="a it" style="left:1104.5px;top:542.6px">:</div>
<div class="a it" style="left:1104.5px;top:558.3px">:</div>
<div class="a it" style="left:1104.5px;top:574.0px">:</div>
<div class="a it" style="left:1104.5px;top:589.6px">:</div>
<div class="a it" style="left:1104.5px;top:605.2px">:</div>
<div class="a it" style="left:1104.5px;top:620.9px">: <b>104.5</b></div>
<div class="a it" style="left:1104.5px;top:636.5px">: <b>C</b></div>
<div class="a it" style="left:1104.5px;top:652.2px">: <b>05:22</b></div>
<div class="a it" style="left:1105.5px;top:667.9px;font-size:10.6px">查看: <b>10:39</b></div>
<div class="a it" style="left:1105.5px;top:683.5px;font-size:10.6px">播放:</div>
<div class="a it" style="left:1105.5px;top:699.1px;font-size:10.6px">次数:</div>
<div class="a it" style="left:1104.5px;top:714.8px">:</div>
<div class="a it" style="left:1083px;top:730.5px;font-size:10.6px">字段一:</div>
<div class="a it" style="left:1083px;top:746.1px;font-size:10.6px">字段二:</div>
<div class="a" style="left:1236px;top:368px;width:14px;height:395px;background:#3b3b3b"></div>
<div class="a" style="left:1249px;top:368px;width:1px;height:395px;background:#2a2a2a"></div>
<div class="a" style="left:7px;top:763px;width:1243px;height:8px;background:#3c3c3c;border-top:1px solid #1a1a1a"></div>

<!-- ================= DIALOG ================= -->
<div id="dlg" class="a">
  <!-- sidebar selected -->
  <div class="a" style="left:8px;top:8px;width:95px;height:66px;background:linear-gradient(#454545 0,#3d3d3d 50%,#262626 50%,#1f1f1f 100%)"></div>
  <div class="a" style="left:103px;top:8px;width:1px;height:684px;background:#b4b4b4"></div>
  <!-- sidebar icons -->
  <svg class="a" style="left:0;top:0" width="104" height="640" viewBox="0 0 104 640">
    <!-- speaker -->
    <rect x="44" y="14.6" width="24" height="34.8" rx="2.5" fill="#dcdcdc"/>
    <circle cx="56" cy="21.7" r="2.8" fill="none" stroke="#262626" stroke-width="1.6"/>
    <circle cx="56" cy="37.3" r="7.8" fill="none" stroke="#262626" stroke-width="1.7"/>
    <circle cx="56" cy="37.3" r="1.8" fill="#262626"/>
    <!-- monitor -->
    <rect x="36" y="79.5" width="39" height="28" rx="1" fill="#262626"/>
    <path d="M51.5 107.5 L60.5 107.5 L61.5 110.4 L64.5 110.6 L64.5 112.5 L46.8 112.5 L46.8 110.6 L50.5 110.4 Z" fill="#262626"/>
    <!-- mixer -->
    <rect x="41.5" y="148" width="30.3" height="30.8" rx="4.5" fill="#2a2a2a"/>
    <g stroke="#f2f2f2" stroke-width="3" stroke-linecap="round">
      <line x1="48.6" y1="155.8" x2="48.6" y2="172.6"/><line x1="56.4" y1="155.8" x2="56.4" y2="172.6"/><line x1="64.3" y1="155.8" x2="64.3" y2="172.6"/>
    </g>
    <g fill="#2a2a2a"><rect x="44" y="160" width="9" height="6.5"/><rect x="52" y="165" width="9" height="6.5"/><rect x="60" y="158" width="9" height="6.5"/></g>
    <g fill="#f2f2f2"><rect x="45.1" y="161.6" width="6.8" height="2.7" rx="1.3"/><rect x="53" y="166.8" width="6.8" height="2.5" rx="1.2"/><rect x="61" y="160" width="6.8" height="2.6" rx="1.3"/></g>
    <!-- gear -->
    <g transform="translate(55.6 229.3)" fill="#2a2a2a">
      <circle r="13"/>
      <g id="tooth"><path d="M-2.6 -17.6 L2.6 -17.6 L3.4 -11 L-3.4 -11 Z"/></g>
      <path d="M-2.6 -17.6 L2.6 -17.6 L3.4 -11 L-3.4 -11 Z" transform="rotate(45)"/>
      <path d="M-2.6 -17.6 L2.6 -17.6 L3.4 -11 L-3.4 -11 Z" transform="rotate(90)"/>
      <path d="M-2.6 -17.6 L2.6 -17.6 L3.4 -11 L-3.4 -11 Z" transform="rotate(135)"/>
      <path d="M-2.6 -17.6 L2.6 -17.6 L3.4 -11 L-3.4 -11 Z" transform="rotate(180)"/>
      <path d="M-2.6 -17.6 L2.6 -17.6 L3.4 -11 L-3.4 -11 Z" transform="rotate(225)"/>
      <path d="M-2.6 -17.6 L2.6 -17.6 L3.4 -11 L-3.4 -11 Z" transform="rotate(270)"/>
      <path d="M-2.6 -17.6 L2.6 -17.6 L3.4 -11 L-3.4 -11 Z" transform="rotate(315)"/>
      <circle r="9" fill="none" stroke="#f2f2f2" stroke-width="1.6"/>
      <circle r="3" fill="#f2f2f2"/>
    </g>
    <!-- lock -->
    <path d="M48 294.5 V287 A8 8 0 0 1 64 287 V294.5" fill="none" stroke="#262626" stroke-width="3.6"/>
    <rect x="44" y="294" width="24" height="18" fill="#262626"/>
    <!-- puzzle -->
    <path d="M38.8 350.2 H46.5 A5.4 5.4 0 1 1 57.2 350.2 H64.6 Q67.6 350.2 67.6 353.2 V361.2 A5.2 5.2 0 1 1 67.6 370.6 V379.3 Q67.6 382.3 64.6 382.3 H59.6 A6.4 6.4 0 0 0 47 382.3 H38.8 Q35.8 382.3 35.8 379.3 V373.6 A5.6 5.6 0 0 0 35.8 362.4 V353.2 Q35.8 350.2 38.8 350.2 Z" fill="#2a2a2a"/>
    <!-- dish -->
    <defs><linearGradient id="dg" x1="0" y1="0" x2="1" y2="1"><stop offset="0" stop-color="#111"/><stop offset="1" stop-color="#3a3a3a"/></linearGradient></defs><ellipse cx="54.5" cy="436" rx="16" ry="10.5" transform="rotate(-15 54.5 436)" fill="url(#dg)"/>
    <line x1="53.4" y1="437.5" x2="60.9" y2="420.3" stroke="#f0f0f0" stroke-width="5" stroke-linecap="round"/>
    <line x1="53.4" y1="437.5" x2="60.9" y2="420.3" stroke="#2a2a2a" stroke-width="2.6" stroke-linecap="round"/>
    <circle cx="60.9" cy="419.8" r="2.9" fill="#2a2a2a"/>
    <path d="M52.5 414.5 A12 12 0 0 1 69.5 419.5" fill="none" stroke="#2a2a2a" stroke-width="2.2"/>
    <path d="M49 410 A18 18 0 0 1 74.3 417" fill="none" stroke="#2a2a2a" stroke-width="2.2"/>
    <!-- folder -->
    <defs><linearGradient id="fg" x1="0" y1="0" x2="0" y2="1"><stop offset="0" stop-color="#1e1e1e"/><stop offset="0.5" stop-color="#3a3a3a"/><stop offset="1" stop-color="#222"/></linearGradient></defs>
    <path d="M39.5 479 H54 L58.5 484 H71.5 Q74.5 484 74.5 487 V504 Q74.5 507 71.5 507 H40.5 Q37.5 507 37.5 504 V481 Q37.5 479 39.5 479 Z" fill="url(#fg)"/>
    <path d="M43.6 490 L53.5 489 V500.5" fill="none" stroke="#f4f4f4" stroke-width="2"/>
    <line x1="43.6" y1="490" x2="43.6" y2="501" stroke="#f4f4f4" stroke-width="2"/>
    <ellipse cx="41.8" cy="501.5" rx="2.7" ry="2.2" fill="#f4f4f4"/>
    <ellipse cx="51.7" cy="501" rx="2.7" ry="2.2" fill="#f4f4f4"/>
    <!-- tablet -->
    <rect x="41.7" y="542" width="27.3" height="35.7" rx="3" fill="#262626"/>
    <rect x="44" y="544.3" width="22.7" height="26.2" fill="#f0f0f0"/>
    <circle cx="55.6" cy="574.2" r="1.3" fill="#f0f0f0"/>
  </svg>
  <div class="side" style="top:58.5px;color:#f0f0f0">音频</div>
  <div class="side" style="top:124px">外观</div>
  <div class="side" style="top:190px">控制</div>
  <div class="side" style="top:256px">配置</div>
  <div class="side" style="top:322px">许可证</div>
  <div class="side" style="top:388px">扩展插件</div>
  <div class="side" style="top:455px">播客</div>
  <div class="side" style="top:520px">录制</div>
  <div class="side" style="top:586px">远程</div>
  <!-- header -->
  <div class="a c" style="left:111px;top:8px;width:831px;height:35px;background:linear-gradient(#4a4a4a 0,#3a3a3a 50%,#262626 50%,#1e1e1e 100%);color:#f4f4f4;font-size:13px;text-shadow:0 0 .4px #fff">音频配置</div>
  <svg class="a" style="left:920px;top:20px" width="12" height="12"><path d="M1.3 1.3 L10.7 10.7 M10.7 1.3 L1.3 10.7" stroke="#d0d0d0" stroke-width="1.4"/></svg>
  <!-- panels -->
  <div class="a tab" style="left:131px;top:51px;width:65px">输出</div>
  <div class="a pn" style="left:111px;top:71px;width:204px;height:152px"></div>
  <div class="a tab" style="left:342px;top:51px;width:66px">声卡</div>
  <div class="a pn" style="left:323px;top:71px;width:407px;height:152px"></div>
  <div class="a tab" style="left:758px;top:51px;width:66px">输入</div>
  <div class="a pn" style="left:738px;top:71px;width:204px;height:152px"></div>

  <div class="a bt sel" style="left:119px;top:79px;width:188px"><span style="left:96px">音箱输出</span></div>
  <div class="a bt" style="left:119px;top:127px;width:188px"><span style="left:96px">监听耳机</span></div>
  <div class="a bt" style="left:119px;top:175px;width:188px"><span style="left:96px">混音设备</span></div>

  <div class="a bt sel" style="left:331px;top:79px;width:191px"><span style="left:98px">内置声卡</span></div>
  <div class="a bt" style="left:531px;top:79px;width:191px"><span style="left:103px">双声卡</span></div>
  <div class="a bt" style="left:331px;top:127px;width:191px"><span style="left:98px">声道分离</span></div>

  <div class="a bt" style="left:746px;top:79px;width:188px"><span style="left:102px">麦克风</span></div>
  <div class="a bt" style="left:746px;top:127px;width:188px"><span style="left:95px">时间编码</span></div>
  <div class="a bt" style="left:746px;top:175px;width:188px"><span style="left:95px">线路直通</span></div>


  <!-- audio output -->
  <svg class="a" style="left:0;top:0" width="949" height="260" viewBox="0 0 949 260">
    <!-- speaker -->
    <rect x="139.8" y="86" width="17.2" height="25" rx="2" fill="#172335"/>
    <circle cx="148.2" cy="91.3" r="2.3" fill="none" stroke="#c8dcf0" stroke-width="1.1"/>
    <circle cx="148.2" cy="102.3" r="5.8" fill="none" stroke="#c8dcf0" stroke-width="1.2"/>
    <circle cx="148.2" cy="102.3" r="1.2" fill="#c8dcf0"/>
    <!-- headphones -->
    <path d="M142.3 151.5 V145.5 A7.2 7.2 0 0 1 156.7 145.5 V151.5" fill="none" stroke="#2a2a2a" stroke-width="2.6"/>
    <rect x="140" y="146.5" width="5.6" height="11.2" rx="2.8" fill="#2a2a2a"/>
    <rect x="153.4" y="146.5" width="5.6" height="11.2" rx="2.8" fill="#2a2a2a"/>
    <!-- mixer -->
    <rect x="137" y="183.4" width="23" height="23.6" rx="3" fill="#232323"/>
    <g stroke="#f2f2f2" stroke-width="2.2" stroke-linecap="round">
      <line x1="142.5" y1="189" x2="142.5" y2="201.8"/><line x1="148.5" y1="189" x2="148.5" y2="201.8"/><line x1="154.5" y1="189" x2="154.5" y2="201.8"/>
    </g>
    <g fill="#232323"><rect x="139.5" y="192.3" width="6.2" height="4.6"/><rect x="145.5" y="196" width="6.2" height="4.6"/><rect x="151.5" y="190.8" width="6.2" height="4.6"/></g>
    <g fill="#f2f2f2"><rect x="140.2" y="193.3" width="4.8" height="2" rx="1"/><rect x="146.2" y="197" width="4.8" height="2" rx="1"/><rect x="152.2" y="191.8" width="4.8" height="2" rx="1"/></g>
    <!-- soundcard -->
    <path d="M349 90 L371.5 90 L371.5 102.7 L346 102.7 L345 100 Z" fill="#111"/>
    <g fill="#555"><circle cx="352" cy="94" r="1"/><circle cx="358" cy="96" r="1.2"/><circle cx="364" cy="93" r="1"/><circle cx="368" cy="98" r="1"/><circle cx="355" cy="99" r="0.8"/></g>
    <path d="M343 104.5 Q343 102.7 346 102.7 L378 102.7 Q380.5 104.5 378 107.5 L346 107.5 Q343 107.5 343 104.5 Z" fill="#d9e3ee"/>
    <g fill="#333"><rect x="348" y="104" width="1.4" height="2"/><rect x="352" y="104" width="1.4" height="2"/><rect x="356" y="104" width="1.4" height="2"/><rect x="360" y="104" width="1.4" height="2"/><rect x="364" y="104" width="1.4" height="2"/><circle cx="369" cy="105" r="1.6" fill="#111"/><circle cx="373" cy="105" r="1.6" fill="#111"/></g>
    <!-- cable -->
    <path d="M350.6 145 C354 140 360 135.5 364 135.5 C369 135.5 372 141 373.4 147 L379.6 158.6" fill="none" stroke="#1e1e1e" stroke-width="1.2"/>
    <path d="M350.6 145 L343 150" stroke="#1e1e1e" stroke-width="3.2" stroke-linecap="round"/>
    <path d="M353 148.5 L347.2 155.5" stroke="#1e1e1e" stroke-width="3.4" stroke-linecap="round"/>
    <path d="M353 148.5 C356 142 360 136 364 135.5" fill="none" stroke="#1e1e1e" stroke-width="1.1"/>
    <path d="M372.5 144 L376 151.5" stroke="#1e1e1e" stroke-width="2.2" stroke-linecap="round"/>
    <!-- dual card -->
    <path d="M550 87 L568.8 87 L568.8 95.2 L548 95.2 L547.5 94 Z" fill="#151515"/>
    <path d="M546 97.3 L574 97.3 L574 99.6 L546 99.6 Z" fill="#bbb"/>
    <g fill="#222"><circle cx="554" cy="98.4" r="0.8"/><circle cx="558" cy="98.4" r="0.8"/><circle cx="562" cy="98.4" r="0.8"/><circle cx="566" cy="98.4" r="1.3"/><circle cx="569" cy="98.4" r="1.3"/></g>
    <rect x="544.2" y="102" width="31.8" height="8.2" fill="#c6c6c6" stroke="#999" stroke-width="0.6"/>
    <g fill="#333"><circle cx="548.5" cy="106.2" r="1.4"/><circle cx="552.3" cy="106.2" r="1.4"/><rect x="555.5" y="104.6" width="2" height="3.2" fill="#888"/><rect x="559.5" y="104.3" width="4.5" height="3.8" fill="#666"/><rect x="565.3" y="104.3" width="4.5" height="3.8" fill="#666"/><rect x="571" y="104.3" width="4.5" height="3.8" fill="#666"/></g>
    <!-- mic -->
    <rect x="772" y="85" width="7" height="19.3" rx="3.5" fill="#2a2a2a"/>
    <path d="M768.3 96 V98 A7.4 7.4 0 0 0 783 98 V96" fill="none" stroke="#2a2a2a" stroke-width="1.9"/>
    <line x1="775.5" y1="105" x2="775.5" y2="110" stroke="#2a2a2a" stroke-width="1.9"/>
    <rect x="769.9" y="109.4" width="11.2" height="1.6" fill="#2a2a2a"/>
    <!-- disc -->
    <circle cx="775.5" cy="147.2" r="13.1" fill="#262626"/>
    <circle cx="775.5" cy="147.2" r="4.2" fill="none" stroke="#e8e8e8" stroke-width="1.1"/>
    <circle cx="775.5" cy="147.2" r="1.5" fill="#e8e8e8"/>
    <g fill="none" stroke="#bbb" stroke-width="0.7"><path d="M779 139 A9 9 0 0 1 784 143.5"/><path d="M779.5 137 A11 11 0 0 1 786 143"/><path d="M780 135 A13 13 0 0 1 788 142"/></g>
    <!-- jack -->
    <line x1="762.5" y1="204.7" x2="770" y2="200" stroke="#262626" stroke-width="2.2" stroke-linecap="round"/>
    <line x1="767" y1="202" x2="781" y2="193" stroke="#262626" stroke-width="4" stroke-linecap="round"/>
    <line x1="780" y1="193.6" x2="791.5" y2="184" stroke="#262626" stroke-width="2" stroke-linecap="round"/>
    <circle cx="791.5" cy="184" r="1.5" fill="#262626"/>
  </svg>
  <div class="a sel2" style="left:111px;top:280px;width:113px"></div>
  <div class="a sel2" style="left:223px;top:280px;width:396px"></div>
  <div class="a sel2" style="left:618px;top:280px;width:168px"></div>
  <div class="a sel2" style="left:785px;top:280px;width:115px"></div>
  <div class="a" style="left:115px;top:283px;font-size:12.5px;color:#111;line-height:16px">前台主控</div>
  <div class="a" style="left:227px;top:283px;font-size:12.5px;color:#111;line-height:16px">Built-in Output</div>
  <div class="a" style="left:622px;top:283px;font-size:12.3px;color:#111;line-height:16px">chan 1 &amp; 2</div>
  <div class="a" style="left:790px;top:283px;font-size:12.3px;color:#bbb;line-height:16px">44.1k 11.0ms 2o/0i</div>
  <div class="a" style="left:112px;top:257px;font-size:12px;color:#222">音频输出</div>
  <svg class="a" style="left:0;top:0" width="949" height="340">
    <!-- chevrons -->
    <g fill="none" stroke="#222" stroke-width="1.6">
      <polyline points="209,288.5 212.7,292.2 216.4,288.5"/>
      <polyline points="603.5,288.5 607.2,292.2 610.9,288.5"/>
      <polyline points="771.5,288.5 775.2,292.2 778.9,288.5"/>
    </g>
    <path d="M900 316 H909 M904.5 311.5 V320.5" stroke="#222" stroke-width="1.5"/>
  </svg>

  <!-- watermark -->
  <div class="a" style="left:156px;top:520px;font-size:21px;font-weight:normal;color:#dd1111;letter-spacing:4px;-webkit-text-stroke:.5px #dd1111">拉普拉斯</div>
  <div class="a" style="left:155px;top:547.5px;font-size:16.5px;color:#111">lapulace.com</div>

  <div class="a" style="left:27px;top:679px;font-size:11.5px;color:#111">v8.3 b4459</div>

  <div class="a" style="left:449px;top:689px;width:155px;height:2px;background:#b8b8b8"></div>
  <!-- video -->
  <div class="a sel2" style="left:700px;top:642px;width:186px;height:22px;background:#fff"></div>
  <svg class="a" style="left:866px;top:648px" width="12" height="10"><polyline points="2,3 6,7 10,3" fill="none" stroke="#111" stroke-width="1.7"/></svg>
  <div class="a" style="left:894px;top:643px;width:20px;height:20px;background:#e1e1e1;border:1px solid #a8a8a8"></div>
  <svg class="a" style="left:894px;top:643px" width="20" height="20" viewBox="0 0 20 20">
    <path d="M4.8 5 H13.6 L15.6 7 V15.4 H4.8 Z" fill="#262626"/>
    <rect x="7.4" y="5" width="4.5" height="3.3" fill="#e1e1e1"/><rect x="9.6" y="5.4" width="1.4" height="2.5" fill="#262626"/>
    <rect x="6.4" y="11" width="7.6" height="3.2" fill="#e1e1e1"/>
  </svg>
  <div class="a" style="left:922px;top:643px;width:20px;height:20px;background:#e1e1e1;border:1px solid #a8a8a8"></div>
  <svg class="a" style="left:922px;top:643px" width="20" height="20" viewBox="0 0 20 20">
    <path d="M7 7 L13.5 13.5 M13.5 7 L7 13.5" stroke="#e00" stroke-width="2.8" stroke-linecap="butt"/>
  </svg>
  <div class="a" style="left:449px;top:689px;width:155px;height:2px;background:#b8b8b8"></div>
  <!-- video -->
  <div class="a" style="left:432px;top:429px;width:374px;height:261px;background:#000;box-shadow:0 0 6px rgba(0,0,0,.35)"></div>
  <svg class="a" style="left:432px;top:429px" width="374" height="261" viewBox="0 0 374 261">
    <defs>
      <radialGradient id="sky" cx="0.45" cy="0.45" r="0.6"><stop offset="0" stop-color="#080a12"/><stop offset="1" stop-color="#020204"/></radialGradient>
      <linearGradient id="crowd" x1="0" y1="0" x2="0" y2="1"><stop offset="0" stop-color="#0b0d18"/><stop offset="1" stop-color="#040408"/></linearGradient>
      <radialGradient id="glow" cx="0.5" cy="0.5" r="0.5"><stop offset="0" stop-color="#6fa8d8" stop-opacity=".35"/><stop offset="1" stop-color="#6fa8d8" stop-opacity="0"/></radialGradient>
    </defs>
    <rect x="0" y="25" width="374" height="210" fill="url(#sky)"/>
    
    
    <!-- stage panels -->
    <ellipse cx="300" cy="125" rx="90" ry="45" fill="url(#glow)" opacity=".35"/>
    <polygon points="225,122 236.5,119.5 236.5,158.3 225,158.3" fill="#b8e2dc"/>
    <polygon points="242,115.4 269,110 269,158.3 242,158.3" fill="#b0e0da"/>
    <circle cx="243.3" cy="156.4" r="1.2" fill="#2a4fd0" opacity="0.85"/><circle cx="245.3" cy="150.6" r="1.8" fill="#2a4fd0" opacity="0.70"/><circle cx="244.6" cy="146.3" r="0.9" fill="#2a4fd0" opacity="0.68"/><circle cx="248.0" cy="151.8" r="1.8" fill="#2a4fd0" opacity="0.70"/><circle cx="251.3" cy="124.6" r="0.8" fill="#2a4fd0" opacity="0.69"/><circle cx="247.0" cy="118.5" r="1.1" fill="#2a4fd0" opacity="0.73"/><circle cx="248.1" cy="121.5" r="1.4" fill="#2a4fd0" opacity="0.91"/><circle cx="251.8" cy="143.6" r="1.9" fill="#2a4fd0" opacity="0.80"/><circle cx="244.3" cy="117.5" r="0.8" fill="#2a4fd0" opacity="0.92"/><circle cx="249.3" cy="156.4" r="0.8" fill="#2a4fd0" opacity="0.82"/><circle cx="247.3" cy="146.7" r="1.3" fill="#2a4fd0" opacity="0.95"/><circle cx="243.7" cy="138.9" r="2.0" fill="#2a4fd0" opacity="0.92"/><circle cx="249.6" cy="145.6" r="2.1" fill="#2a4fd0" opacity="0.92"/><circle cx="246.2" cy="144.8" r="2.2" fill="#2a4fd0" opacity="0.90"/><circle cx="246.8" cy="149.2" r="2.2" fill="#2a4fd0" opacity="0.80"/><circle cx="248.6" cy="132.1" r="1.7" fill="#2a4fd0" opacity="0.81"/><circle cx="243.7" cy="142.9" r="2.4" fill="#2a4fd0" opacity="0.91"/><circle cx="249.6" cy="132.3" r="2.0" fill="#2a4fd0" opacity="0.80"/><circle cx="247.0" cy="151.2" r="0.9" fill="#2a4fd0" opacity="0.86"/><circle cx="243.3" cy="141.3" r="1.6" fill="#2a4fd0" opacity="0.68"/><circle cx="249.3" cy="136.9" r="1.8" fill="#2a4fd0" opacity="0.92"/><circle cx="245.3" cy="116.5" r="1.3" fill="#2a4fd0" opacity="0.84"/><circle cx="256.8" cy="118.4" r="1.5" fill="#2a4fd0" opacity="0.83"/><circle cx="260.2" cy="145.9" r="0.9" fill="#2a4fd0" opacity="0.83"/><circle cx="256.8" cy="128.4" r="1.4" fill="#2a4fd0" opacity="0.92"/><circle cx="266.3" cy="126.6" r="1.2" fill="#2a4fd0" opacity="0.71"/><circle cx="255.9" cy="130.9" r="1.4" fill="#2a4fd0" opacity="0.90"/><circle cx="264.0" cy="148.1" r="0.9" fill="#2a4fd0" opacity="0.66"/><circle cx="260.3" cy="122.5" r="0.8" fill="#2a4fd0" opacity="0.74"/><circle cx="262.8" cy="130.8" r="0.9" fill="#2a4fd0" opacity="0.89"/><circle cx="267.7" cy="129.2" r="0.7" fill="#2a4fd0" opacity="0.61"/><circle cx="266.2" cy="113.6" r="1.3" fill="#2a4fd0" opacity="0.80"/>
    <polygon points="235,117 244.4,117 244.4,137 235,137" fill="#0c0c0c"/>
    <polygon points="265,141 282,141 282,158.3 265,158.3" fill="#dde6f2"/>
    <polygon points="281,104 324,102 324,158.3 281,158.3" fill="#d6def0"/>
    <path d="M283 150 C290 130 300 112 324 104 L324 122 C310 128 300 140 296 158.3 L285 158.3 Z" fill="#b8c8ec"/>
    <circle cx="296.1" cy="146.4" r="0.7" fill="#2a4fd0" opacity="0.65"/><circle cx="301.7" cy="107.3" r="1.8" fill="#2a4fd0" opacity="0.68"/><circle cx="289.5" cy="108.4" r="1.5" fill="#2a4fd0" opacity="0.76"/><circle cx="308.6" cy="139.4" r="1.7" fill="#2a4fd0" opacity="0.94"/><circle cx="310.7" cy="116.2" r="1.3" fill="#2a4fd0" opacity="0.66"/><circle cx="284.4" cy="130.1" r="1.6" fill="#2a4fd0" opacity="0.66"/><circle cx="294.6" cy="123.6" r="1.6" fill="#2a4fd0" opacity="0.78"/><circle cx="308.0" cy="144.6" r="1.2" fill="#2a4fd0" opacity="0.88"/><circle cx="319.3" cy="110.4" r="1.9" fill="#2a4fd0" opacity="0.85"/><circle cx="289.1" cy="129.1" r="1.5" fill="#2a4fd0" opacity="0.92"/><circle cx="298.7" cy="135.0" r="1.8" fill="#2a4fd0" opacity="0.88"/><circle cx="320.8" cy="129.6" r="1.5" fill="#2a4fd0" opacity="0.67"/><circle cx="312.2" cy="147.7" r="1.5" fill="#2a4fd0" opacity="0.85"/><circle cx="292.3" cy="151.9" r="2.0" fill="#2a4fd0" opacity="0.94"/><circle cx="304.9" cy="146.3" r="1.1" fill="#2a4fd0" opacity="0.92"/><circle cx="317.4" cy="123.8" r="0.8" fill="#2a4fd0" opacity="0.75"/><circle cx="305.5" cy="145.2" r="1.3" fill="#2a4fd0" opacity="0.61"/><circle cx="315.6" cy="109.3" r="1.7" fill="#2a4fd0" opacity="0.66"/><circle cx="297.1" cy="146.2" r="0.9" fill="#2a4fd0" opacity="0.65"/><circle cx="304.1" cy="142.9" r="1.8" fill="#2a4fd0" opacity="0.84"/><circle cx="320.9" cy="131.1" r="1.9" fill="#2a4fd0" opacity="0.63"/><circle cx="292.6" cy="132.9" r="1.1" fill="#2a4fd0" opacity="0.86"/><circle cx="308.9" cy="132.7" r="1.8" fill="#2a4fd0" opacity="0.80"/><circle cx="296.2" cy="125.4" r="1.8" fill="#2a4fd0" opacity="0.92"/><circle cx="292.1" cy="149.4" r="2.0" fill="#2a4fd0" opacity="0.78"/><circle cx="306.3" cy="116.2" r="1.4" fill="#2a4fd0" opacity="0.78"/><circle cx="307.6" cy="107.4" r="2.0" fill="#2a4fd0" opacity="0.78"/><circle cx="299.6" cy="146.9" r="1.4" fill="#2a4fd0" opacity="0.77"/><circle cx="310.9" cy="109.4" r="1.4" fill="#2a4fd0" opacity="0.74"/><circle cx="321.3" cy="153.1" r="1.0" fill="#2a4fd0" opacity="0.77"/><circle cx="289.0" cy="128.1" r="1.8" fill="#2a4fd0" opacity="0.92"/><circle cx="302.6" cy="122.2" r="0.9" fill="#2a4fd0" opacity="0.82"/><circle cx="320.1" cy="112.6" r="1.7" fill="#2a4fd0" opacity="0.61"/><circle cx="291.6" cy="117.6" r="1.6" fill="#2a4fd0" opacity="0.71"/><circle cx="297.9" cy="137.6" r="0.8" fill="#2a4fd0" opacity="0.86"/><circle cx="288.8" cy="132.0" r="1.0" fill="#2a4fd0" opacity="0.67"/><circle cx="304.7" cy="128.3" r="1.2" fill="#2a4fd0" opacity="0.74"/><circle cx="304.6" cy="114.1" r="1.0" fill="#2a4fd0" opacity="0.82"/><circle cx="308.9" cy="133.0" r="1.8" fill="#2a4fd0" opacity="0.81"/><circle cx="317.4" cy="117.9" r="1.7" fill="#2a4fd0" opacity="0.88"/><circle cx="319.2" cy="122.1" r="1.1" fill="#2a4fd0" opacity="0.92"/><circle cx="292.5" cy="156.9" r="1.9" fill="#2a4fd0" opacity="0.65"/><circle cx="293.3" cy="143.1" r="1.0" fill="#2a4fd0" opacity="0.63"/><circle cx="316.5" cy="127.5" r="1.7" fill="#2a4fd0" opacity="0.64"/><circle cx="299.7" cy="140.9" r="0.7" fill="#2a4fd0" opacity="0.67"/><circle cx="310.6" cy="152.5" r="2.0" fill="#2a4fd0" opacity="0.64"/><circle cx="303.7" cy="144.7" r="1.4" fill="#2a4fd0" opacity="0.84"/><circle cx="291.4" cy="109.6" r="0.8" fill="#2a4fd0" opacity="0.61"/><circle cx="305.5" cy="132.3" r="1.4" fill="#2a4fd0" opacity="0.65"/><circle cx="291.2" cy="116.4" r="1.8" fill="#2a4fd0" opacity="0.95"/><circle cx="320.1" cy="110.9" r="0.8" fill="#2a4fd0" opacity="0.93"/><circle cx="302.0" cy="145.0" r="1.1" fill="#2a4fd0" opacity="0.76"/><circle cx="304.1" cy="127.9" r="1.5" fill="#2a4fd0" opacity="0.60"/><circle cx="311.3" cy="149.1" r="0.9" fill="#2a4fd0" opacity="0.76"/><circle cx="312.8" cy="126.7" r="1.0" fill="#2a4fd0" opacity="0.66"/><circle cx="304.0" cy="106.8" r="1.9" fill="#2a4fd0" opacity="0.88"/><circle cx="311.5" cy="149.9" r="1.5" fill="#2a4fd0" opacity="0.74"/><circle cx="307.4" cy="131.7" r="2.0" fill="#2a4fd0" opacity="0.88"/><circle cx="294.1" cy="152.5" r="1.7" fill="#2a4fd0" opacity="0.87"/><circle cx="315.8" cy="126.7" r="1.9" fill="#2a4fd0" opacity="0.91"/><circle cx="311.1" cy="145.1" r="1.7" fill="#2a4fd0" opacity="0.74"/><circle cx="312.2" cy="109.6" r="1.1" fill="#2a4fd0" opacity="0.76"/><circle cx="284.4" cy="124.1" r="1.5" fill="#2a4fd0" opacity="0.82"/><circle cx="293.1" cy="154.2" r="1.6" fill="#2a4fd0" opacity="0.72"/><circle cx="309.7" cy="135.0" r="1.4" fill="#2a4fd0" opacity="0.74"/><circle cx="323.0" cy="138.8" r="1.6" fill="#2a4fd0" opacity="0.87"/><circle cx="322.2" cy="107.2" r="1.5" fill="#2a4fd0" opacity="0.86"/><circle cx="294.0" cy="126.5" r="0.8" fill="#2a4fd0" opacity="0.67"/><circle cx="298.7" cy="111.0" r="1.0" fill="#2a4fd0" opacity="0.92"/><circle cx="305.5" cy="131.9" r="2.0" fill="#2a4fd0" opacity="0.80"/>
    <polygon points="269,104 289,104 289,139 281,141 269,141" fill="#0a0a0a"/>
    <g fill="#e8e060"><circle cx="294.7" cy="113.8" r="1.0" opacity="0.71"/><circle cx="297.4" cy="114.9" r="0.6" opacity="0.73"/><circle cx="303.2" cy="122.9" r="0.5" opacity="0.64"/><circle cx="277.4" cy="123.6" r="0.8" opacity="0.52"/><circle cx="320.1" cy="129.6" r="0.8" opacity="0.78"/><circle cx="280.6" cy="92.6" r="0.8" opacity="0.53"/><circle cx="282.1" cy="101.4" r="0.5" opacity="0.71"/><circle cx="294.1" cy="124.9" r="0.8" opacity="0.79"/><circle cx="297.0" cy="117.8" r="0.7" opacity="0.63"/><circle cx="320.9" cy="130.8" r="0.9" opacity="0.82"/><circle cx="288.1" cy="101.0" r="0.6" opacity="0.53"/><circle cx="309.8" cy="107.6" r="0.9" opacity="0.67"/><circle cx="319.0" cy="125.0" r="0.5" opacity="0.59"/><circle cx="316.7" cy="110.3" r="1.0" opacity="0.68"/><circle cx="276.5" cy="116.5" r="0.9" opacity="0.62"/><circle cx="277.2" cy="105.0" r="1.0" opacity="0.84"/><circle cx="278.7" cy="101.6" r="0.6" opacity="0.53"/><circle cx="311.3" cy="98.9" r="0.8" opacity="0.70"/><circle cx="282.2" cy="120.5" r="0.6" opacity="0.79"/><circle cx="278.6" cy="108.4" r="0.6" opacity="0.62"/><circle cx="319.6" cy="123.3" r="0.7" opacity="0.90"/><circle cx="283.1" cy="107.4" r="0.9" opacity="0.79"/><circle cx="277.8" cy="130.6" r="0.6" opacity="0.62"/><circle cx="310.1" cy="104.8" r="0.6" opacity="0.53"/><circle cx="277.3" cy="114.7" r="0.6" opacity="0.77"/><circle cx="290.8" cy="109.7" r="1.0" opacity="0.72"/><circle cx="300.6" cy="125.8" r="0.6" opacity="0.57"/><circle cx="316.6" cy="123.9" r="0.6" opacity="0.59"/><circle cx="308.5" cy="128.7" r="0.6" opacity="0.93"/><circle cx="315.3" cy="115.5" r="0.7" opacity="0.55"/></g>
    <polygon points="323,86 333.5,84 333.5,158.3 323,158.3" fill="#c8d8f0"/>
    <circle cx="333.0" cy="132.0" r="1.9" fill="#2a4fd0" opacity="0.63"/><circle cx="329.0" cy="140.4" r="0.9" fill="#2a4fd0" opacity="0.93"/><circle cx="324.6" cy="120.6" r="1.0" fill="#2a4fd0" opacity="0.77"/><circle cx="329.1" cy="92.0" r="2.1" fill="#2a4fd0" opacity="0.75"/><circle cx="328.3" cy="129.3" r="1.3" fill="#2a4fd0" opacity="0.70"/><circle cx="329.6" cy="126.7" r="1.2" fill="#2a4fd0" opacity="0.85"/><circle cx="326.0" cy="89.0" r="1.1" fill="#2a4fd0" opacity="0.61"/><circle cx="324.6" cy="140.1" r="1.3" fill="#2a4fd0" opacity="0.91"/><circle cx="330.5" cy="91.5" r="2.2" fill="#2a4fd0" opacity="0.93"/><circle cx="323.7" cy="150.5" r="1.4" fill="#2a4fd0" opacity="0.77"/><circle cx="332.7" cy="104.8" r="1.5" fill="#2a4fd0" opacity="0.93"/><circle cx="330.2" cy="120.3" r="2.2" fill="#2a4fd0" opacity="0.89"/><circle cx="329.0" cy="95.9" r="1.7" fill="#2a4fd0" opacity="0.76"/><circle cx="325.0" cy="91.6" r="1.5" fill="#2a4fd0" opacity="0.64"/><circle cx="327.4" cy="134.1" r="1.4" fill="#2a4fd0" opacity="0.69"/><circle cx="328.8" cy="116.9" r="1.9" fill="#2a4fd0" opacity="0.79"/><circle cx="333.0" cy="153.7" r="1.8" fill="#2a4fd0" opacity="0.68"/><circle cx="324.1" cy="149.6" r="1.9" fill="#2a4fd0" opacity="0.82"/><circle cx="326.6" cy="106.7" r="1.8" fill="#2a4fd0" opacity="0.80"/><circle cx="328.9" cy="131.7" r="1.9" fill="#2a4fd0" opacity="0.67"/><circle cx="325.5" cy="155.6" r="2.1" fill="#2a4fd0" opacity="0.91"/><circle cx="323.4" cy="92.2" r="1.2" fill="#2a4fd0" opacity="0.75"/><circle cx="329.2" cy="95.1" r="1.6" fill="#2a4fd0" opacity="0.63"/><circle cx="323.9" cy="134.7" r="1.6" fill="#2a4fd0" opacity="0.82"/><circle cx="326.7" cy="121.0" r="1.1" fill="#2a4fd0" opacity="0.72"/><circle cx="330.4" cy="145.9" r="0.9" fill="#2a4fd0" opacity="0.64"/><circle cx="331.1" cy="131.0" r="1.9" fill="#2a4fd0" opacity="0.67"/><circle cx="327.2" cy="105.8" r="1.9" fill="#2a4fd0" opacity="0.73"/>
    <polygon points="336.6,80.4 359,76 359,158.3 336.6,158.3" fill="#a8e2d6"/>
    <polygon points="327,77.5 341,77 341,120 329,120" fill="#0a0a0a"/>
    <polygon points="346,74 360.5,72 360.5,116 347,116" fill="#0a0a0a"/>
    <polygon points="359,71.7 373,68 373,158.3 359,158.3" fill="#b8e0e4"/>
    <circle cx="368.2" cy="156.1" r="1.5" fill="#2a4fd0" opacity="0.79"/><circle cx="369.4" cy="150.3" r="1.6" fill="#2a4fd0" opacity="0.73"/><circle cx="360.4" cy="146.4" r="1.0" fill="#2a4fd0" opacity="0.63"/><circle cx="366.9" cy="113.2" r="2.1" fill="#2a4fd0" opacity="0.70"/><circle cx="369.9" cy="78.5" r="1.3" fill="#2a4fd0" opacity="0.83"/><circle cx="360.1" cy="97.8" r="2.1" fill="#2a4fd0" opacity="0.84"/><circle cx="363.0" cy="84.1" r="1.5" fill="#2a4fd0" opacity="0.85"/><circle cx="364.1" cy="82.0" r="2.1" fill="#2a4fd0" opacity="0.80"/><circle cx="371.9" cy="151.9" r="2.5" fill="#2a4fd0" opacity="0.75"/><circle cx="370.2" cy="97.9" r="1.4" fill="#2a4fd0" opacity="0.74"/><circle cx="372.1" cy="148.1" r="1.3" fill="#2a4fd0" opacity="0.73"/><circle cx="364.1" cy="102.9" r="1.6" fill="#2a4fd0" opacity="0.74"/><circle cx="361.7" cy="119.9" r="2.3" fill="#2a4fd0" opacity="0.79"/><circle cx="370.7" cy="119.8" r="1.2" fill="#2a4fd0" opacity="0.87"/><circle cx="371.3" cy="95.9" r="0.9" fill="#2a4fd0" opacity="0.78"/><circle cx="366.6" cy="120.2" r="2.5" fill="#2a4fd0" opacity="0.83"/><circle cx="370.3" cy="77.4" r="1.8" fill="#2a4fd0" opacity="0.88"/><circle cx="360.2" cy="78.9" r="2.2" fill="#2a4fd0" opacity="0.91"/><circle cx="360.2" cy="125.9" r="1.1" fill="#2a4fd0" opacity="0.86"/><circle cx="368.1" cy="92.9" r="1.3" fill="#2a4fd0" opacity="0.87"/><circle cx="366.3" cy="137.0" r="1.6" fill="#2a4fd0" opacity="0.72"/><circle cx="372.6" cy="129.2" r="1.7" fill="#2a4fd0" opacity="0.79"/><circle cx="369.1" cy="132.2" r="2.5" fill="#2a4fd0" opacity="0.74"/><circle cx="370.6" cy="128.7" r="2.4" fill="#2a4fd0" opacity="0.88"/><circle cx="370.7" cy="147.5" r="2.5" fill="#2a4fd0" opacity="0.82"/><circle cx="366.3" cy="132.4" r="2.3" fill="#2a4fd0" opacity="0.75"/><circle cx="364.9" cy="84.4" r="2.2" fill="#2a4fd0" opacity="0.95"/><circle cx="364.3" cy="86.3" r="1.2" fill="#2a4fd0" opacity="0.75"/><circle cx="363.1" cy="154.4" r="1.0" fill="#2a4fd0" opacity="0.71"/><circle cx="360.6" cy="127.1" r="2.2" fill="#2a4fd0" opacity="0.66"/><circle cx="359.9" cy="111.0" r="1.9" fill="#2a4fd0" opacity="0.92"/><circle cx="359.5" cy="81.2" r="1.2" fill="#2a4fd0" opacity="0.68"/><circle cx="362.3" cy="133.0" r="1.9" fill="#2a4fd0" opacity="0.68"/><circle cx="361.6" cy="95.9" r="1.2" fill="#2a4fd0" opacity="0.87"/><circle cx="363.4" cy="118.6" r="2.3" fill="#2a4fd0" opacity="0.77"/><circle cx="362.6" cy="147.4" r="2.5" fill="#2a4fd0" opacity="0.72"/><circle cx="366.7" cy="153.3" r="1.7" fill="#2a4fd0" opacity="0.68"/><circle cx="359.7" cy="152.5" r="2.3" fill="#2a4fd0" opacity="0.73"/><circle cx="366.4" cy="115.8" r="1.4" fill="#2a4fd0" opacity="0.95"/><circle cx="368.2" cy="92.2" r="0.9" fill="#2a4fd0" opacity="0.77"/><circle cx="350.8" cy="149.1" r="1.8" fill="#2a4fd0" opacity="0.81"/><circle cx="348.0" cy="124.1" r="1.3" fill="#2a4fd0" opacity="0.69"/><circle cx="357.3" cy="138.1" r="1.7" fill="#2a4fd0" opacity="0.95"/><circle cx="349.5" cy="138.8" r="1.0" fill="#2a4fd0" opacity="0.87"/><circle cx="346.0" cy="150.0" r="2.0" fill="#2a4fd0" opacity="0.89"/><circle cx="347.1" cy="128.5" r="1.8" fill="#2a4fd0" opacity="0.63"/><circle cx="352.2" cy="136.3" r="2.1" fill="#2a4fd0" opacity="0.81"/><circle cx="357.1" cy="129.8" r="1.9" fill="#2a4fd0" opacity="0.75"/><circle cx="357.9" cy="121.5" r="2.0" fill="#2a4fd0" opacity="0.67"/><circle cx="353.1" cy="138.5" r="1.0" fill="#2a4fd0" opacity="0.89"/><circle cx="350.0" cy="130.1" r="0.9" fill="#2a4fd0" opacity="0.71"/><circle cx="352.1" cy="145.9" r="1.3" fill="#2a4fd0" opacity="0.84"/><circle cx="347.4" cy="133.4" r="1.4" fill="#2a4fd0" opacity="0.94"/><circle cx="356.8" cy="143.5" r="0.8" fill="#2a4fd0" opacity="0.73"/>
    <g fill="#3a3a40"><rect x="272" y="147" width="2" height="11"/><rect x="275" y="146" width="2" height="12"/><rect x="279" y="148" width="2" height="10"/><rect x="283" y="147" width="2" height="11"/></g>
    <g fill="#f0f0f0" opacity=".8"><circle cx="193" cy="157.5" r=".8"/><circle cx="200" cy="157.5" r=".7"/><circle cx="215" cy="157.5" r="1"/><circle cx="233" cy="157" r="1.3"/><circle cx="240" cy="157.5" r=".8"/><circle cx="300" cy="158" r=".8"/></g>
    <rect x="176" y="104" width="14" height="4" fill="#c85a20"/>
    <rect x="160" y="98" width="20" height="2" fill="#3a2a1a" opacity=".6"/>
    <rect x="215" y="159" width="159" height="1.5" fill="#c8d8e8" opacity=".25"/>
    <g opacity=".45"><rect x="121.1" y="162.8" width="1.1" height="1.8" fill="#1a2a2a"/><rect x="35.2" y="199.5" width="1.4" height="1.1" fill="#2a2030"/><rect x="156.4" y="170.5" width="1.8" height="1.8" fill="#2a2030"/><rect x="46.3" y="169.0" width="2.2" height="1.1" fill="#1a2a2a"/><rect x="219.0" y="154.2" width="1.1" height="1.9" fill="#151a30"/><rect x="108.3" y="162.3" width="2.1" height="1.6" fill="#1a1f3a"/><rect x="255.1" y="158.8" width="2.3" height="1.4" fill="#2a2030"/><rect x="204.9" y="155.3" width="2.2" height="1.5" fill="#1a1f3a"/><rect x="198.9" y="216.1" width="2.2" height="1.5" fill="#0f1428"/><rect x="112.1" y="217.5" width="2.6" height="1.1" fill="#1a2a2a"/><rect x="112.3" y="192.1" width="2.5" height="1.3" fill="#222844"/><rect x="366.6" y="160.0" width="1.3" height="1.3" fill="#0f1428"/><rect x="349.0" y="185.8" width="1.2" height="1.6" fill="#1a2a2a"/><rect x="295.1" y="219.6" width="2.4" height="1.6" fill="#222844"/><rect x="216.9" y="188.8" width="2.9" height="1.5" fill="#1a1f3a"/><rect x="248.4" y="155.2" width="1.6" height="1.6" fill="#1a2a2a"/><rect x="254.8" y="187.9" width="1.8" height="1.7" fill="#1a2a2a"/><rect x="8.4" y="189.2" width="2.2" height="1.5" fill="#151a30"/><rect x="81.6" y="174.4" width="1.5" height="1.4" fill="#1a2a2a"/><rect x="325.9" y="156.8" width="1.8" height="1.3" fill="#0f1428"/><rect x="51.2" y="186.6" width="1.6" height="1.4" fill="#2a2030"/><rect x="134.2" y="225.2" width="1.3" height="1.2" fill="#151a30"/><rect x="86.8" y="169.8" width="2.7" height="1.2" fill="#0f1428"/><rect x="105.4" y="162.4" width="1.7" height="1.6" fill="#2a2030"/><rect x="356.5" y="208.7" width="2.9" height="1.7" fill="#2a2030"/><rect x="276.7" y="188.8" width="2.6" height="1.4" fill="#1a2a2a"/><rect x="149.2" y="158.8" width="1.8" height="1.2" fill="#1a2a2a"/><rect x="368.3" y="187.5" width="1.7" height="1.1" fill="#1a1f3a"/><rect x="0.1" y="162.9" width="2.9" height="1.6" fill="#1a1f3a"/><rect x="26.3" y="167.7" width="1.3" height="1.3" fill="#0f1428"/><rect x="129.9" y="181.0" width="1.2" height="1.5" fill="#1a1f3a"/><rect x="365.7" y="190.8" width="1.2" height="1.1" fill="#222844"/><rect x="128.1" y="172.5" width="1.3" height="1.0" fill="#1a2a2a"/><rect x="355.7" y="194.9" width="2.4" height="1.9" fill="#151a30"/><rect x="283.5" y="175.3" width="2.7" height="1.7" fill="#1a2a2a"/><rect x="97.7" y="181.2" width="1.7" height="1.2" fill="#151a30"/><rect x="202.5" y="192.7" width="1.4" height="1.8" fill="#1a2a2a"/><rect x="368.4" y="222.5" width="2.6" height="1.7" fill="#151a30"/><rect x="84.8" y="194.0" width="2.5" height="2.0" fill="#222844"/><rect x="295.5" y="190.1" width="2.4" height="2.0" fill="#151a30"/><rect x="167.3" y="229.6" width="2.9" height="1.4" fill="#222844"/><rect x="82.5" y="169.3" width="1.7" height="1.5" fill="#151a30"/><rect x="368.5" y="201.9" width="2.0" height="1.7" fill="#1a1f3a"/><rect x="299.1" y="157.2" width="1.2" height="1.4" fill="#1a2a2a"/><rect x="266.1" y="166.9" width="1.9" height="1.6" fill="#151a30"/><rect x="32.4" y="230.4" width="1.8" height="1.4" fill="#1a2a2a"/><rect x="354.1" y="211.6" width="3.0" height="1.0" fill="#151a30"/><rect x="221.0" y="189.6" width="1.3" height="1.8" fill="#1a2a2a"/><rect x="366.6" y="205.9" width="1.3" height="1.5" fill="#222844"/><rect x="8.0" y="217.9" width="2.3" height="1.5" fill="#1a2a2a"/><rect x="349.2" y="186.9" width="2.7" height="1.2" fill="#151a30"/><rect x="94.2" y="174.9" width="2.5" height="1.3" fill="#151a30"/><rect x="203.6" y="220.9" width="2.8" height="1.4" fill="#1a1f3a"/><rect x="171.4" y="199.6" width="1.8" height="1.9" fill="#2a2030"/><rect x="187.6" y="195.2" width="2.0" height="1.9" fill="#2a2030"/><rect x="290.4" y="201.7" width="1.3" height="1.5" fill="#151a30"/><rect x="271.2" y="197.3" width="2.4" height="1.5" fill="#222844"/><rect x="180.5" y="216.0" width="1.1" height="1.2" fill="#2a2030"/><rect x="15.8" y="158.3" width="2.1" height="1.8" fill="#0f1428"/><rect x="341.3" y="187.7" width="2.9" height="1.6" fill="#2a2030"/><rect x="74.6" y="173.6" width="2.1" height="1.5" fill="#2a2030"/><rect x="352.1" y="209.4" width="2.8" height="1.9" fill="#222844"/><rect x="75.8" y="188.0" width="1.2" height="1.4" fill="#0f1428"/><rect x="27.1" y="170.5" width="1.4" height="1.3" fill="#1a1f3a"/><rect x="45.8" y="216.0" width="2.3" height="1.4" fill="#1a2a2a"/><rect x="94.7" y="161.7" width="1.4" height="2.0" fill="#0f1428"/><rect x="148.9" y="191.4" width="2.7" height="1.2" fill="#1a2a2a"/><rect x="161.4" y="193.8" width="1.8" height="1.4" fill="#222844"/><rect x="34.5" y="181.1" width="2.1" height="1.4" fill="#222844"/><rect x="6.8" y="178.2" width="1.6" height="2.0" fill="#2a2030"/><rect x="42.2" y="228.1" width="2.9" height="1.1" fill="#151a30"/><rect x="99.3" y="153.4" width="1.5" height="1.1" fill="#151a30"/><rect x="157.9" y="227.5" width="1.8" height="1.5" fill="#222844"/><rect x="192.5" y="192.0" width="1.2" height="1.1" fill="#222844"/><rect x="257.4" y="186.2" width="1.5" height="1.0" fill="#1a1f3a"/><rect x="33.1" y="172.1" width="2.7" height="1.1" fill="#2a2030"/><rect x="322.7" y="188.6" width="3.0" height="1.4" fill="#222844"/><rect x="342.4" y="202.8" width="2.1" height="1.2" fill="#1a1f3a"/><rect x="40.9" y="163.7" width="1.4" height="1.9" fill="#1a1f3a"/><rect x="235.1" y="195.1" width="1.6" height="1.5" fill="#151a30"/><rect x="66.5" y="179.5" width="3.0" height="1.0" fill="#1a1f3a"/><rect x="6.9" y="193.0" width="2.0" height="1.2" fill="#151a30"/><rect x="167.2" y="206.0" width="1.9" height="1.5" fill="#1a2a2a"/><rect x="312.1" y="183.4" width="1.6" height="1.2" fill="#2a2030"/><rect x="85.9" y="166.9" width="2.5" height="1.1" fill="#1a2a2a"/><rect x="370.0" y="233.5" width="1.0" height="1.6" fill="#151a30"/><rect x="329.1" y="186.6" width="1.2" height="1.8" fill="#1a1f3a"/><rect x="325.6" y="207.0" width="2.2" height="1.7" fill="#222844"/><rect x="16.9" y="165.8" width="1.9" height="1.3" fill="#222844"/><rect x="359.7" y="232.7" width="1.6" height="1.0" fill="#2a2030"/><rect x="330.0" y="168.5" width="1.0" height="1.4" fill="#151a30"/><rect x="177.5" y="192.7" width="1.5" height="1.8" fill="#151a30"/><rect x="34.0" y="219.4" width="1.8" height="1.0" fill="#151a30"/><rect x="8.4" y="175.9" width="1.2" height="2.0" fill="#151a30"/><rect x="319.1" y="163.2" width="2.6" height="1.6" fill="#1a2a2a"/><rect x="285.9" y="211.3" width="1.3" height="1.7" fill="#0f1428"/><rect x="240.6" y="153.7" width="2.8" height="1.6" fill="#1a2a2a"/><rect x="274.5" y="219.0" width="2.8" height="1.8" fill="#151a30"/><rect x="212.6" y="219.1" width="2.7" height="1.6" fill="#1a1f3a"/><rect x="333.9" y="208.0" width="2.3" height="1.1" fill="#1a2a2a"/><rect x="15.7" y="204.2" width="1.8" height="1.5" fill="#1a1f3a"/><rect x="19.0" y="151.6" width="2.4" height="1.5" fill="#2a2030"/><rect x="1.2" y="217.8" width="2.9" height="1.9" fill="#1a2a2a"/><rect x="34.4" y="194.7" width="2.5" height="1.3" fill="#1a2a2a"/><rect x="27.8" y="172.6" width="2.5" height="1.2" fill="#1a2a2a"/><rect x="243.1" y="189.1" width="1.2" height="1.9" fill="#0f1428"/><rect x="107.5" y="154.0" width="2.3" height="1.1" fill="#1a2a2a"/><rect x="55.1" y="171.6" width="2.4" height="1.6" fill="#1a2a2a"/><rect x="49.9" y="191.0" width="1.5" height="1.7" fill="#0f1428"/><rect x="258.9" y="207.4" width="2.4" height="1.3" fill="#222844"/><rect x="174.2" y="215.2" width="1.4" height="2.0" fill="#2a2030"/><rect x="350.2" y="151.5" width="1.2" height="1.5" fill="#0f1428"/><rect x="372.0" y="234.5" width="1.4" height="1.9" fill="#0f1428"/><rect x="78.8" y="199.4" width="2.5" height="1.3" fill="#151a30"/><rect x="134.5" y="201.3" width="2.0" height="1.9" fill="#1a2a2a"/><rect x="263.0" y="169.7" width="1.8" height="1.2" fill="#0f1428"/><rect x="355.3" y="207.9" width="1.6" height="1.1" fill="#0f1428"/><rect x="128.6" y="176.9" width="1.0" height="1.8" fill="#222844"/><rect x="313.8" y="160.2" width="2.4" height="1.9" fill="#151a30"/><rect x="108.4" y="181.6" width="1.8" height="1.9" fill="#0f1428"/><rect x="28.6" y="228.7" width="2.7" height="1.3" fill="#222844"/><rect x="19.3" y="206.3" width="2.9" height="1.2" fill="#1a2a2a"/><rect x="99.4" y="193.4" width="2.5" height="1.8" fill="#151a30"/><rect x="160.0" y="152.5" width="1.8" height="1.9" fill="#1a2a2a"/><rect x="207.3" y="167.3" width="1.1" height="1.7" fill="#1a1f3a"/><rect x="168.6" y="214.0" width="2.7" height="1.5" fill="#1a2a2a"/><rect x="341.1" y="196.8" width="1.9" height="1.3" fill="#151a30"/><rect x="111.4" y="212.8" width="1.5" height="1.7" fill="#1a2a2a"/><rect x="112.5" y="197.4" width="1.2" height="1.6" fill="#0f1428"/><rect x="28.1" y="192.6" width="2.1" height="1.5" fill="#0f1428"/><rect x="124.5" y="214.5" width="1.3" height="1.2" fill="#0f1428"/><rect x="33.9" y="179.1" width="1.6" height="1.4" fill="#1a1f3a"/><rect x="302.7" y="167.2" width="2.5" height="1.4" fill="#1a1f3a"/><rect x="154.8" y="194.6" width="1.5" height="1.8" fill="#0f1428"/><rect x="186.3" y="198.8" width="1.3" height="1.5" fill="#222844"/><rect x="235.5" y="223.3" width="1.2" height="1.9" fill="#151a30"/><rect x="143.8" y="204.9" width="2.9" height="1.8" fill="#0f1428"/><rect x="326.5" y="151.9" width="1.9" height="1.8" fill="#1a1f3a"/><rect x="300.8" y="232.3" width="1.0" height="1.4" fill="#0f1428"/><rect x="346.6" y="220.2" width="2.9" height="1.2" fill="#0f1428"/><rect x="40.8" y="163.1" width="2.9" height="1.1" fill="#2a2030"/><rect x="308.7" y="209.6" width="1.2" height="1.8" fill="#0f1428"/><rect x="0.5" y="160.7" width="2.8" height="1.6" fill="#2a2030"/><rect x="113.6" y="160.9" width="2.1" height="1.4" fill="#222844"/><rect x="285.7" y="158.5" width="2.0" height="1.6" fill="#222844"/><rect x="145.1" y="169.0" width="1.0" height="1.5" fill="#2a2030"/><rect x="372.6" y="173.7" width="2.3" height="1.9" fill="#222844"/><rect x="177.8" y="170.0" width="1.1" height="1.4" fill="#151a30"/><rect x="243.0" y="154.7" width="2.0" height="1.7" fill="#151a30"/><rect x="157.1" y="171.9" width="1.8" height="1.4" fill="#1a2a2a"/><rect x="184.4" y="209.1" width="1.8" height="1.7" fill="#1a2a2a"/><rect x="74.1" y="217.8" width="2.7" height="1.1" fill="#1a2a2a"/><rect x="185.4" y="167.0" width="1.5" height="1.2" fill="#151a30"/><rect x="284.4" y="175.1" width="2.0" height="1.2" fill="#2a2030"/><rect x="83.5" y="185.4" width="1.1" height="1.6" fill="#1a2a2a"/><rect x="344.8" y="154.6" width="2.9" height="1.1" fill="#1a1f3a"/><rect x="19.4" y="155.1" width="1.9" height="1.7" fill="#0f1428"/><rect x="117.5" y="159.6" width="2.9" height="1.3" fill="#1a1f3a"/><rect x="69.4" y="229.5" width="1.9" height="1.3" fill="#1a2a2a"/><rect x="271.3" y="221.3" width="1.9" height="1.1" fill="#222844"/><rect x="29.3" y="156.9" width="2.9" height="1.1" fill="#0f1428"/><rect x="360.6" y="167.6" width="2.5" height="1.3" fill="#222844"/><rect x="300.7" y="157.5" width="1.9" height="1.4" fill="#1a2a2a"/><rect x="343.9" y="166.4" width="2.5" height="1.5" fill="#222844"/><rect x="236.2" y="171.1" width="2.5" height="1.0" fill="#1a2a2a"/><rect x="13.0" y="155.3" width="1.5" height="1.7" fill="#1a1f3a"/><rect x="336.1" y="178.8" width="1.7" height="2.0" fill="#222844"/><rect x="16.3" y="213.4" width="1.6" height="1.3" fill="#1a2a2a"/><rect x="1.4" y="214.2" width="2.9" height="1.1" fill="#1a2a2a"/><rect x="308.9" y="159.1" width="2.9" height="2.0" fill="#1a2a2a"/><rect x="144.6" y="171.3" width="2.6" height="1.1" fill="#0f1428"/><rect x="185.7" y="150.7" width="1.6" height="1.7" fill="#1a2a2a"/><rect x="56.6" y="170.1" width="1.9" height="1.8" fill="#222844"/><rect x="222.8" y="193.5" width="2.5" height="1.2" fill="#0f1428"/><rect x="24.2" y="152.9" width="2.1" height="1.2" fill="#2a2030"/><rect x="159.5" y="158.9" width="1.5" height="1.1" fill="#1a1f3a"/><rect x="36.1" y="192.4" width="2.9" height="1.2" fill="#1a2a2a"/><rect x="49.7" y="189.2" width="1.5" height="1.5" fill="#1a2a2a"/><rect x="289.4" y="214.6" width="1.6" height="1.6" fill="#222844"/><rect x="139.5" y="212.7" width="1.9" height="1.2" fill="#151a30"/><rect x="88.1" y="173.9" width="1.4" height="1.1" fill="#2a2030"/><rect x="94.1" y="170.9" width="1.5" height="1.8" fill="#2a2030"/><rect x="244.3" y="234.2" width="1.0" height="1.9" fill="#1a1f3a"/><rect x="86.4" y="188.1" width="1.1" height="1.3" fill="#222844"/><rect x="44.6" y="166.1" width="1.4" height="1.1" fill="#2a2030"/><rect x="191.7" y="165.1" width="1.5" height="1.8" fill="#2a2030"/><rect x="353.7" y="159.0" width="2.4" height="1.3" fill="#2a2030"/><rect x="14.0" y="178.9" width="1.4" height="1.3" fill="#1a1f3a"/><rect x="224.2" y="205.4" width="2.6" height="1.8" fill="#151a30"/><rect x="153.0" y="181.6" width="1.6" height="1.2" fill="#2a2030"/><rect x="297.4" y="196.6" width="1.8" height="1.8" fill="#1a1f3a"/><rect x="248.3" y="163.1" width="1.2" height="1.2" fill="#2a2030"/><rect x="260.1" y="184.8" width="2.3" height="1.4" fill="#222844"/><rect x="19.2" y="213.4" width="1.8" height="1.0" fill="#222844"/><rect x="286.7" y="218.2" width="1.4" height="1.7" fill="#1a2a2a"/><rect x="76.2" y="150.5" width="1.8" height="1.8" fill="#151a30"/><rect x="151.9" y="225.0" width="2.5" height="1.1" fill="#0f1428"/><rect x="19.3" y="162.1" width="1.2" height="1.6" fill="#0f1428"/><rect x="138.7" y="192.9" width="1.7" height="1.2" fill="#151a30"/><rect x="64.2" y="155.7" width="2.0" height="1.8" fill="#0f1428"/><rect x="361.6" y="166.8" width="2.7" height="1.0" fill="#151a30"/><rect x="341.4" y="176.7" width="2.9" height="1.4" fill="#2a2030"/><rect x="338.2" y="202.7" width="2.3" height="1.9" fill="#151a30"/><rect x="232.3" y="202.3" width="2.7" height="1.2" fill="#151a30"/><rect x="81.6" y="184.0" width="1.3" height="1.4" fill="#2a2030"/><rect x="55.9" y="232.5" width="1.1" height="1.6" fill="#151a30"/><rect x="283.3" y="153.2" width="1.2" height="1.6" fill="#222844"/><rect x="205.7" y="203.3" width="2.3" height="1.3" fill="#222844"/><rect x="93.2" y="183.1" width="1.9" height="1.4" fill="#222844"/><rect x="8.7" y="202.6" width="1.9" height="1.4" fill="#0f1428"/><rect x="231.3" y="219.6" width="2.6" height="1.4" fill="#151a30"/><rect x="25.1" y="180.5" width="1.2" height="1.4" fill="#222844"/><rect x="190.8" y="153.5" width="1.3" height="1.9" fill="#1a2a2a"/><rect x="117.3" y="211.2" width="1.1" height="1.5" fill="#1a1f3a"/><rect x="141.3" y="230.8" width="1.1" height="1.1" fill="#151a30"/><rect x="229.7" y="208.9" width="1.4" height="2.0" fill="#1a1f3a"/><rect x="184.0" y="231.3" width="2.4" height="1.7" fill="#151a30"/><rect x="82.7" y="220.8" width="2.5" height="1.2" fill="#2a2030"/><rect x="335.3" y="173.4" width="1.3" height="1.5" fill="#0f1428"/><rect x="344.0" y="167.7" width="2.2" height="1.2" fill="#222844"/><rect x="139.2" y="166.9" width="1.3" height="1.9" fill="#0f1428"/><rect x="254.2" y="226.1" width="2.6" height="1.3" fill="#151a30"/><rect x="287.3" y="154.1" width="2.9" height="1.5" fill="#222844"/><rect x="195.0" y="208.5" width="1.5" height="1.5" fill="#1a1f3a"/><rect x="320.4" y="212.7" width="1.5" height="2.0" fill="#222844"/><rect x="215.9" y="180.6" width="1.9" height="1.2" fill="#1a1f3a"/><rect x="278.1" y="154.1" width="1.5" height="1.6" fill="#2a2030"/><rect x="368.0" y="199.8" width="2.8" height="1.7" fill="#1a2a2a"/><rect x="279.4" y="168.8" width="2.2" height="1.4" fill="#222844"/><rect x="191.7" y="226.1" width="2.0" height="1.6" fill="#151a30"/><rect x="17.0" y="154.6" width="1.7" height="1.1" fill="#2a2030"/><rect x="133.6" y="169.1" width="1.6" height="1.1" fill="#2a2030"/><rect x="137.0" y="220.4" width="1.3" height="1.9" fill="#151a30"/><rect x="91.1" y="162.7" width="1.1" height="1.1" fill="#1a1f3a"/><rect x="248.9" y="172.9" width="2.9" height="1.1" fill="#222844"/><rect x="307.0" y="225.9" width="2.3" height="1.4" fill="#2a2030"/><rect x="350.5" y="212.3" width="1.3" height="1.0" fill="#151a30"/><rect x="23.0" y="152.1" width="1.5" height="1.1" fill="#151a30"/><rect x="291.3" y="151.0" width="2.3" height="1.2" fill="#2a2030"/><rect x="154.5" y="194.1" width="2.0" height="1.6" fill="#1a2a2a"/><rect x="304.2" y="164.8" width="1.1" height="1.6" fill="#222844"/><rect x="371.8" y="211.6" width="2.4" height="1.0" fill="#0f1428"/><rect x="315.8" y="213.3" width="1.2" height="1.7" fill="#0f1428"/><rect x="65.6" y="234.7" width="1.5" height="1.0" fill="#222844"/><rect x="125.5" y="213.7" width="2.9" height="1.3" fill="#1a2a2a"/><rect x="19.6" y="204.0" width="1.9" height="1.8" fill="#1a2a2a"/><rect x="195.7" y="172.6" width="2.9" height="1.9" fill="#1a2a2a"/><rect x="31.9" y="193.1" width="1.5" height="1.2" fill="#151a30"/><rect x="278.2" y="230.3" width="2.8" height="1.2" fill="#1a2a2a"/><rect x="145.4" y="201.1" width="2.8" height="1.6" fill="#0f1428"/><rect x="259.1" y="206.5" width="1.9" height="1.8" fill="#2a2030"/><rect x="260.9" y="222.9" width="2.9" height="1.2" fill="#0f1428"/><rect x="330.9" y="217.1" width="2.2" height="1.1" fill="#0f1428"/><rect x="340.6" y="162.3" width="1.2" height="1.6" fill="#1a1f3a"/><rect x="60.5" y="233.1" width="1.1" height="1.0" fill="#1a2a2a"/><rect x="259.0" y="203.9" width="1.1" height="1.0" fill="#1a2a2a"/><rect x="320.3" y="214.8" width="2.6" height="1.8" fill="#151a30"/><rect x="333.3" y="155.6" width="2.9" height="1.1" fill="#1a2a2a"/><rect x="76.9" y="159.5" width="2.9" height="1.9" fill="#1a1f3a"/><rect x="281.9" y="157.4" width="2.3" height="1.5" fill="#1a2a2a"/></g>
    <!-- visualizer -->
    <circle cx="67.5" cy="219.5" r="30.5" fill="none" stroke="#1d7fc0" stroke-width="1.2" stroke-dasharray="1 2" opacity=".6"/>
    <circle cx="67.5" cy="219.5" r="27" fill="#050c14"/>
    <circle cx="67.5" cy="219.5" r="15.5" fill="none" stroke="#0d3a5e" stroke-width="1.1"/>
    <circle cx="67.5" cy="219.5" r="11" fill="none" stroke="#0b3050" stroke-width="1"/>
    <circle cx="67.5" cy="219.5" r="5.8" fill="#d81818"/>
    <rect x="64" y="218.8" width="6" height="1.4" fill="#f0a0a0" opacity=".7"/>
    <line x1="67.5" y1="213" x2="72.3" y2="192.5" stroke="#3aa0e0" stroke-width="1.6"/>
    <g stroke="#2a8fd8" stroke-width="1.4">
      <line x1="40" y1="229" x2="35" y2="231"/><line x1="40.5" y1="231.5" x2="36" y2="234.5"/><line x1="41.5" y1="233.5" x2="37.5" y2="237"/>
      <line x1="95" y1="229" x2="101" y2="231.5"/><line x1="94.5" y1="231" x2="99.5" y2="234.5"/>
      <line x1="62" y1="247" x2="61.5" y2="251"/><line x1="66" y1="247.5" x2="66" y2="251.5"/><line x1="72" y1="247" x2="72.5" y2="251.5"/><line x1="76" y1="246.5" x2="77" y2="250.5"/>
      <line x1="98" y1="222" x2="103" y2="222"/><line x1="37" y1="222" x2="33" y2="222.5"/>
    </g>
    <g fill="#2a8fd0" opacity=".55"><rect x="140" y="210.0" width="1" height="18"/><rect x="142" y="212.0" width="1" height="14"/><rect x="144" y="206.0" width="1" height="26"/><rect x="146" y="202.0" width="1" height="34"/><rect x="148" y="214.0" width="1" height="10"/><rect x="150" y="216.0" width="1" height="6"/><rect x="152" y="202.0" width="1" height="34"/><rect x="154" y="208.0" width="1" height="22"/><rect x="156" y="210.0" width="1" height="18"/><rect x="158" y="210.0" width="1" height="18"/><rect x="160" y="202.0" width="1" height="34"/><rect x="162" y="202.0" width="1" height="34"/><rect x="164" y="204.0" width="1" height="30"/><rect x="166" y="212.0" width="1" height="14"/><rect x="168" y="210.0" width="1" height="18"/><rect x="170" y="212.0" width="1" height="14"/><rect x="172" y="204.0" width="1" height="30"/><rect x="174" y="216.0" width="1" height="6"/><rect x="176" y="214.0" width="1" height="10"/><rect x="178" y="212.0" width="1" height="14"/><rect x="180" y="216.0" width="1" height="6"/><rect x="182" y="208.0" width="1" height="22"/><rect x="184" y="216.0" width="1" height="6"/><rect x="186" y="208.0" width="1" height="22"/><rect x="188" y="202.0" width="1" height="34"/><rect x="190" y="204.0" width="1" height="30"/><rect x="192" y="204.0" width="1" height="30"/><rect x="194" y="204.0" width="1" height="30"/><rect x="196" y="202.0" width="1" height="34"/><rect x="198" y="212.0" width="1" height="14"/><rect x="200" y="206.0" width="1" height="26"/><rect x="202" y="214.0" width="1" height="10"/><rect x="204" y="216.0" width="1" height="6"/><rect x="206" y="212.0" width="1" height="14"/><rect x="208" y="202.0" width="1" height="34"/><rect x="210" y="210.0" width="1" height="18"/><rect x="212" y="208.0" width="1" height="22"/><rect x="214" y="204.0" width="1" height="30"/><rect x="216" y="208.0" width="1" height="22"/><rect x="218" y="204.0" width="1" height="30"/><rect x="220" y="204.0" width="1" height="30"/><rect x="222" y="206.0" width="1" height="26"/><rect x="224" y="204.0" width="1" height="30"/><rect x="226" y="210.0" width="1" height="18"/><rect x="228" y="206.0" width="1" height="26"/><rect x="230" y="216.0" width="1" height="6"/><rect x="232" y="208.0" width="1" height="22"/><rect x="234" y="212.0" width="1" height="14"/><rect x="236" y="206.0" width="1" height="26"/><rect x="238" y="214.0" width="1" height="10"/><rect x="240" y="210.0" width="1" height="18"/><rect x="242" y="208.0" width="1" height="22"/><rect x="244" y="208.0" width="1" height="22"/><rect x="246" y="214.0" width="1" height="10"/><rect x="248" y="214.0" width="1" height="10"/><rect x="250" y="202.0" width="1" height="34"/><rect x="252" y="202.0" width="1" height="34"/><rect x="254" y="214.0" width="1" height="10"/><rect x="256" y="206.0" width="1" height="26"/><rect x="258" y="214.0" width="1" height="10"/><rect x="260" y="204.0" width="1" height="30"/><rect x="262" y="212.0" width="1" height="14"/><rect x="264" y="216.0" width="1" height="6"/><rect x="266" y="208.0" width="1" height="22"/><rect x="268" y="204.0" width="1" height="30"/><rect x="270" y="204.0" width="1" height="30"/><rect x="272" y="214.0" width="1" height="10"/><rect x="274" y="216.0" width="1" height="6"/>
      <rect x="103" y="214" width="1" height="10"/><rect x="106" y="211" width="1" height="16"/><rect x="109" y="213" width="1" height="12"/>
      <rect x="150" y="207" width="1" height="24"/><rect x="153" y="202" width="1" height="34"/><rect x="156" y="206" width="1" height="26"/><rect x="159" y="204" width="1" height="30"/><rect x="162" y="208" width="1" height="22"/><rect x="165" y="210" width="1" height="18"/>
      <rect x="175" y="209" width="1" height="20"/><rect x="178" y="206" width="1" height="26"/><rect x="181" y="212" width="1" height="14"/><rect x="184" y="208" width="1" height="22"/>
      <rect x="215" y="205" width="1" height="28"/><rect x="218" y="209" width="1" height="20"/><rect x="221" y="203" width="1" height="32"/><rect x="224" y="207" width="1" height="24"/><rect x="227" y="211" width="1" height="16"/>
      <rect x="240" y="208" width="1" height="22"/><rect x="243" y="204" width="1" height="30"/><rect x="246" y="210" width="1" height="18"/><rect x="249" y="206" width="1" height="26"/>
    </g>
    <clipPath id="tc"><rect x="100" y="200" width="174" height="40"/></clipPath><text clip-path="url(#tc)" x="104" y="222.5" font-family="Liberation Sans" font-size="6.6" font-weight="bold" fill="#e8e8e8"><tspan fill="#2a9be0">刘德华</tspan> - 中国人 - 2011 UNFORGETTABLE中国巡迴演唱会</text>
  </svg>
  <svg class="a" style="left:205px;top:70px" width="14" height="20" viewBox="0.2 0.3 14.9 21.3">
    <path d="M1 1 L1 15.5 L4.6 12.2 L7.2 18 L9.6 17 L7.1 11.3 L12 11.3 Z" fill="#111" stroke="#fff" stroke-width="1"/>
  </svg>
</div>
</body></html>
